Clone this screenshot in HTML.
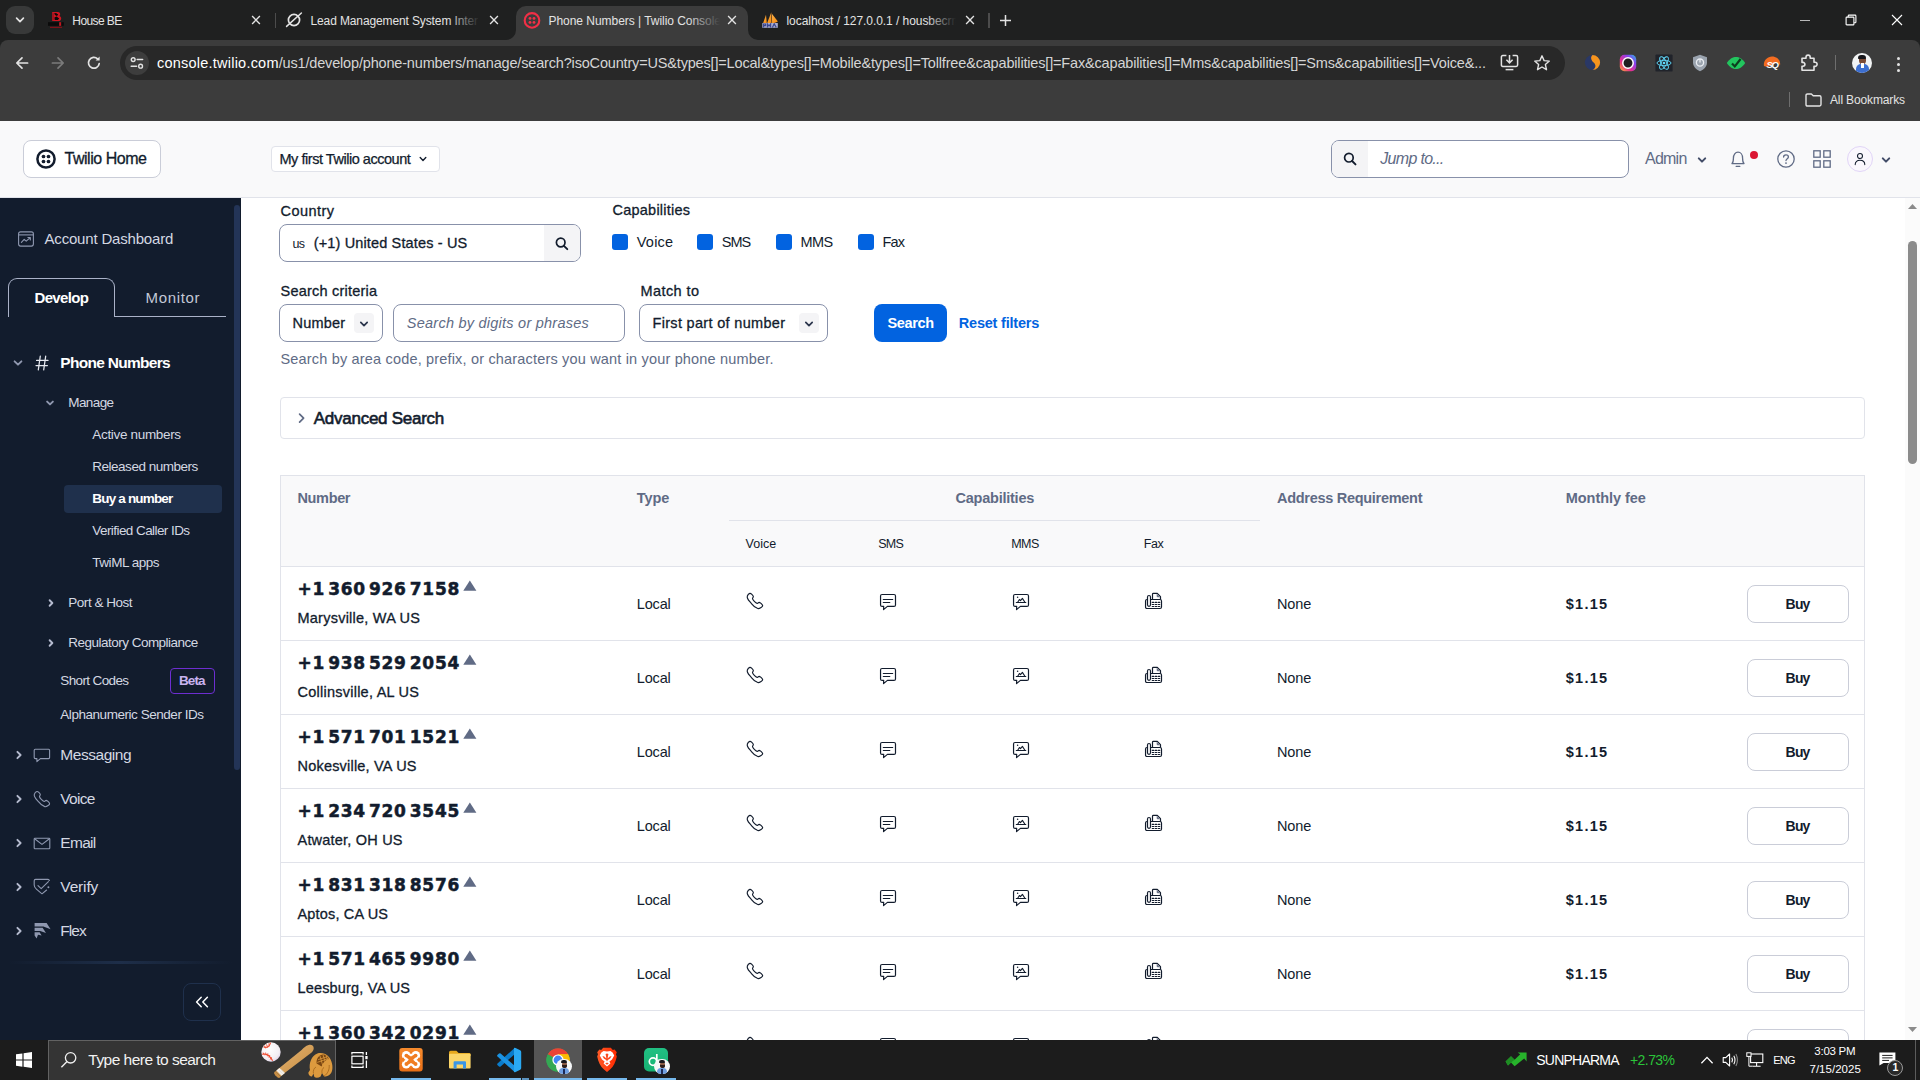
<!DOCTYPE html>
<html lang="en"><head><meta charset="utf-8"><title>Phone Numbers | Twilio Console</title>
<style>
html,body{margin:0;padding:0;}
body{width:1920px;height:1080px;overflow:hidden;position:relative;background:#fff;font-family:"Liberation Sans",sans-serif;}
.a{position:absolute;box-sizing:border-box;}
.t{white-space:pre;}
svg{overflow:visible;}
</style></head>
<body>
<div class="a" style="left:241px;top:197px;width:1679px;height:843px;background:#fff;"></div>
<span class="a t" style="left:280.5px;top:200.8px;font:500 14.5px/20px 'Liberation Sans',sans-serif;color:#121c2d;letter-spacing:0.453px;-webkit-text-stroke:0.3px #121c2d;">Country</span>
<span class="a t" style="left:612.5px;top:200.1px;font:500 14.5px/20px 'Liberation Sans',sans-serif;color:#121c2d;letter-spacing:0.230px;-webkit-text-stroke:0.3px #121c2d;">Capabilities</span>
<div class="a" style="left:279px;top:224px;width:302px;height:38px;background:#fff;border:1px solid #8891aa;border-radius:8px;"></div>
<div class="a" style="left:544px;top:225px;width:36px;height:36px;background:#f4f4f6;border-radius:0 7px 7px 0;"></div>
<svg class="a" style="left:554px;top:236px;" width="16" height="16" viewBox="0 0 16 16"><circle cx="6.7" cy="6.5" r="4.3" fill="none" stroke="#121c2d" stroke-width="1.7"/><path d="M9.9 9.8 L13.3 13.2" stroke="#121c2d" stroke-width="1.9" stroke-linecap="round"/></svg>
<span class="a t" style="left:292.5px;top:235.4px;font:400 12.5px/18px 'Liberation Sans',sans-serif;color:#121c2d;letter-spacing:-0.703px;">us</span>
<span class="a t" style="left:313.7px;top:233px;font:500 14.5px/20px 'Liberation Sans',sans-serif;color:#121c2d;letter-spacing:0.146px;-webkit-text-stroke:0.3px #121c2d;">(+1) United States - US</span>
<div class="a" style="left:612px;top:234px;width:16px;height:16px;background:#0263e0;border-radius:3px;"></div>
<span class="a t" style="left:636.8px;top:231.9px;font:400 14.5px/20px 'Liberation Sans',sans-serif;color:#121c2d;letter-spacing:0.204px;">Voice</span>
<div class="a" style="left:697px;top:234px;width:16px;height:16px;background:#0263e0;border-radius:3px;"></div>
<span class="a t" style="left:721.7px;top:231.9px;font:400 14.5px/20px 'Liberation Sans',sans-serif;color:#121c2d;letter-spacing:-0.911px;">SMS</span>
<div class="a" style="left:776px;top:234px;width:16px;height:16px;background:#0263e0;border-radius:3px;"></div>
<span class="a t" style="left:800.5px;top:231.9px;font:400 14.5px/20px 'Liberation Sans',sans-serif;color:#121c2d;letter-spacing:-0.522px;">MMS</span>
<div class="a" style="left:858px;top:234px;width:16px;height:16px;background:#0263e0;border-radius:3px;"></div>
<span class="a t" style="left:882.5px;top:231.9px;font:400 14.5px/20px 'Liberation Sans',sans-serif;color:#121c2d;letter-spacing:-0.836px;">Fax</span>
<span class="a t" style="left:280.5px;top:280.9px;font:500 14.5px/20px 'Liberation Sans',sans-serif;color:#121c2d;letter-spacing:0.215px;-webkit-text-stroke:0.3px #121c2d;">Search criteria</span>
<span class="a t" style="left:640.5px;top:280.9px;font:500 14.5px/20px 'Liberation Sans',sans-serif;color:#121c2d;letter-spacing:0.413px;-webkit-text-stroke:0.3px #121c2d;">Match to</span>
<div class="a" style="left:279px;top:304px;width:104px;height:38px;background:#fff;border:1px solid #8891aa;border-radius:8px;"></div>
<div class="a" style="left:354px;top:313px;width:20px;height:20px;background:#f4f4f6;border-radius:4px;"></div>
<svg class="a" style="left:359px;top:318.6px;" width="10" height="10" viewBox="0 0 10 10"><path d="M1.7999999999999998 3.4 L5 6.7 L8.2 3.4" fill="none" stroke="#2c364d" stroke-width="1.7" stroke-linecap="round" stroke-linejoin="round"/></svg>
<span class="a t" style="left:292.5px;top:313px;font:500 14.5px/20px 'Liberation Sans',sans-serif;color:#121c2d;letter-spacing:0.184px;-webkit-text-stroke:0.3px #121c2d;">Number</span>
<div class="a" style="left:393px;top:304px;width:232px;height:38px;background:#fff;border:1px solid #8891aa;border-radius:8px;"></div>
<span class="a t" style="left:406.8px;top:313px;font:italic 400 14.5px/20px 'Liberation Sans',sans-serif;color:#606b85;letter-spacing:0.242px;">Search by digits or phrases</span>
<div class="a" style="left:639px;top:304px;width:189px;height:38px;background:#fff;border:1px solid #8891aa;border-radius:8px;"></div>
<div class="a" style="left:799px;top:313px;width:20px;height:20px;background:#f4f4f6;border-radius:4px;"></div>
<svg class="a" style="left:804px;top:318.6px;" width="10" height="10" viewBox="0 0 10 10"><path d="M1.7999999999999998 3.4 L5 6.7 L8.2 3.4" fill="none" stroke="#2c364d" stroke-width="1.7" stroke-linecap="round" stroke-linejoin="round"/></svg>
<span class="a t" style="left:652.5px;top:313px;font:500 14.5px/20px 'Liberation Sans',sans-serif;color:#121c2d;letter-spacing:0.315px;-webkit-text-stroke:0.3px #121c2d;">First part of number</span>
<div class="a" style="left:874px;top:304px;width:73px;height:38px;background:#0263e0;border-radius:8px;"></div>
<span class="a t" style="left:887.5px;top:313px;font:700 14.5px/20px 'Liberation Sans',sans-serif;color:#fff;letter-spacing:-0.375px;">Search</span>
<span class="a t" style="left:958.8px;top:313px;font:700 14.5px/20px 'Liberation Sans',sans-serif;color:#0263e0;letter-spacing:-0.210px;">Reset filters</span>
<span class="a t" style="left:280.5px;top:349px;font:400 14.5px/20px 'Liberation Sans',sans-serif;color:#606b85;letter-spacing:0.175px;">Search by area code, prefix, or characters you want in your phone number.</span>
<div class="a" style="left:280px;top:397px;width:1585px;height:42px;background:#fff;border:1px solid #e1e3ea;border-radius:4px;"></div>
<svg class="a" style="left:296px;top:412px;" width="12" height="12" viewBox="0 0 12 12"><path d="M3.6 2.2 L7.6 6.2 L3.6 10.2" fill="none" stroke="#606b85" stroke-width="1.7" stroke-linecap="round" stroke-linejoin="round"/></svg>
<span class="a t" style="left:313.8px;top:406.6px;font:400 17px/24px 'Liberation Sans',sans-serif;color:#121c2d;letter-spacing:-0.265px;-webkit-text-stroke:0.6px #121c2d;">Advanced Search</span>
<div class="a" style="left:280px;top:475px;width:1585px;height:620px;background:#fff;border:1px solid #e1e3ea;"></div>
<div class="a" style="left:281px;top:476px;width:1583px;height:90px;background:#f9f9fa;"></div>
<div class="a" style="left:281px;top:566px;width:1583px;height:1px;background:#e1e3ea;"></div>
<div class="a" style="left:729px;top:520px;width:531px;height:1px;background:#e1e3ea;"></div>
<span class="a t" style="left:297.5px;top:488px;font:700 14.5px/20px 'Liberation Sans',sans-serif;color:#606b85;letter-spacing:-0.359px;">Number</span>
<span class="a t" style="left:636.8px;top:488px;font:700 14.5px/20px 'Liberation Sans',sans-serif;color:#606b85;letter-spacing:-0.094px;">Type</span>
<span class="a t" style="left:955.5px;top:488px;font:700 14.5px/20px 'Liberation Sans',sans-serif;color:#606b85;letter-spacing:-0.236px;">Capabilities</span>
<span class="a t" style="left:1277px;top:488px;font:700 14.5px/20px 'Liberation Sans',sans-serif;color:#606b85;letter-spacing:-0.288px;">Address Requirement</span>
<span class="a t" style="left:1565.8px;top:488px;font:700 14.5px/20px 'Liberation Sans',sans-serif;color:#606b85;letter-spacing:-0.056px;">Monthly fee</span>
<span class="a t" style="left:745.5px;top:534.6px;font:400 12.5px/18px 'Liberation Sans',sans-serif;color:#121c2d;letter-spacing:0.052px;">Voice</span>
<span class="a t" style="left:878.3px;top:534.6px;font:400 12.5px/18px 'Liberation Sans',sans-serif;color:#121c2d;letter-spacing:-0.797px;">SMS</span>
<span class="a t" style="left:1011.3px;top:534.6px;font:400 12.5px/18px 'Liberation Sans',sans-serif;color:#121c2d;letter-spacing:-0.586px;">MMS</span>
<span class="a t" style="left:1143.8px;top:534.6px;font:400 12.5px/18px 'Liberation Sans',sans-serif;color:#121c2d;letter-spacing:-0.422px;">Fax</span>
<span class="a t" style="left:297.5px;top:576.6px;font:700 17px/24px 'DejaVu Sans','Liberation Sans',sans-serif;color:#121c2d;letter-spacing:0.727px;word-spacing:-3.5px;-webkit-text-stroke:0.5px #121c2d;">+1 360 926 7158</span>
<svg class="a" style="left:463px;top:580px;" width="14" height="11" viewBox="0 0 14 11"><path d="M0.3 10.7 L6.85 0.6 L13.4 10.7 Z" fill="#606b85"/></svg>
<span class="a t" style="left:297.5px;top:608px;font:500 14.5px/20px 'Liberation Sans',sans-serif;color:#121c2d;letter-spacing:0.237px;-webkit-text-stroke:0.3px #121c2d;">Marysville, WA US</span>
<span class="a t" style="left:636.8px;top:594.2px;font:400 14.5px/20px 'Liberation Sans',sans-serif;color:#121c2d;letter-spacing:-0.168px;">Local</span>
<svg class="a" style="left:746px;top:592px;" width="18" height="18" viewBox="0 0 18 18"><path d="M3.86 1.42 C4.9 1.2 7.0 3.1 7.33 4.33 C7.55 5.3 6.4 5.7 6.5 6.56 C6.7 7.9 9.6 10.9 11.22 11.42 C12.1 11.6 12.3 10.2 13.17 10.31 C14.3 10.5 16.5 12.5 16.64 13.64 C16.7 14.4 15.9 15.0 15.11 15.44 C14.1 16.1 12.9 16.9 11.78 16.56 C9.5 15.9 7.3 13.9 5.67 11.83 C4.0 9.9 2.0 7.9 1.5 6.28 C1.1 5.2 1.2 4.6 1.36 4.06 C1.7 3.1 2.8 1.7 3.86 1.42 Z" fill="none" stroke="#121c2d" stroke-width="1.15" stroke-linejoin="round"/></svg>
<svg class="a" style="left:880px;top:594px;" width="18" height="18" viewBox="0 0 18 18"><path d="M2.05 0.5 H14.0 Q15.5 0.5 15.5 2.0 V10.9 Q15.5 12.4 14.0 12.4 H7.4 L3.55 15.6 L3.7 12.4 H2.05 Q0.55 12.4 0.55 10.9 V2.0 Q0.55 0.5 2.05 0.5 Z" fill="none" stroke="#121c2d" stroke-width="1.2" stroke-linejoin="round"/><path d="M3.3 5.45 H12.7 M3.3 8.45 H9.8" stroke="#121c2d" stroke-width="1.15" stroke-linecap="round"/></svg>
<svg class="a" style="left:1013px;top:594px;" width="18" height="18" viewBox="0 0 18 18"><path d="M2.05 0.5 H14.0 Q15.5 0.5 15.5 2.0 V10.9 Q15.5 12.4 14.0 12.4 H7.4 L3.55 15.6 L3.7 12.4 H2.05 Q0.55 12.4 0.55 10.9 V2.0 Q0.55 0.5 2.05 0.5 Z" fill="none" stroke="#121c2d" stroke-width="1.2" stroke-linejoin="round"/><path d="M3.3 8.45 H12.8 M4.7 8.3 L6.4 5.5 L7.5 6.6 L9.4 4.4 L11.9 8.3" fill="none" stroke="#121c2d" stroke-width="1.1" stroke-linecap="round" stroke-linejoin="round"/><circle cx="4.6" cy="3.3" r="0.75" fill="#121c2d"/></svg>
<svg class="a" style="left:1144px;top:592px;" width="19" height="18" viewBox="0 0 19 18"><path d="M7.0 7.5 H16.0 Q17.5 7.5 17.5 9.0 V15.0 Q17.5 16.5 16.0 16.5 H3.0 Q1.55 16.5 1.55 15.0 V9.0 Q1.55 7.5 3.0 7.5 H3.5" fill="none" stroke="#121c2d" stroke-width="1.2"/><rect x="3.5" y="3.5" width="3.0" height="10.8" rx="1.5" fill="#fff" stroke="#121c2d" stroke-width="1.2"/><path d="M8.5 7.5 V2.3 Q8.5 1.45 9.4 1.45 H13.3 L16.5 4.7 V7.5" fill="none" stroke="#121c2d" stroke-width="1.2" stroke-linejoin="round"/><path d="M12.7 1.7 L16.3 5.3 H13.7 Q12.7 5.3 12.7 4.3 Z" fill="#6c7489"/><path d="M8.25 10.4 H9.75 M11.25 10.4 H12.75 M14.25 10.4 H15.75 M8.25 12.45 H9.75 M11.25 12.45 H12.75 M14.25 12.45 H15.75 M8.25 14.45 H9.75 M11.25 14.45 H12.75 M14.25 14.45 H15.75 " stroke="#121c2d" stroke-width="1.15" stroke-linecap="round"/></svg>
<span class="a t" style="left:1277px;top:594.2px;font:400 14.5px/20px 'Liberation Sans',sans-serif;color:#121c2d;letter-spacing:-0.124px;">None</span>
<span class="a t" style="left:1565.8px;top:594.2px;font:700 14.5px/20px 'Liberation Sans',sans-serif;color:#121c2d;letter-spacing:1.251px;">$1.15</span>
<div class="a" style="left:1747px;top:585px;width:102px;height:38px;background:#fff;border:1px solid #cacdd8;border-radius:8px;"></div>
<span class="a t" style="left:1785.6px;top:594px;font:700 14px/20px 'Liberation Sans',sans-serif;color:#121c2d;letter-spacing:-0.827px;">Buy</span>
<div class="a" style="left:281px;top:640px;width:1583px;height:1px;background:#e1e3ea;"></div>
<span class="a t" style="left:297.5px;top:650.6px;font:700 17px/24px 'DejaVu Sans','Liberation Sans',sans-serif;color:#121c2d;letter-spacing:0.727px;word-spacing:-3.5px;-webkit-text-stroke:0.5px #121c2d;">+1 938 529 2054</span>
<svg class="a" style="left:463px;top:654px;" width="14" height="11" viewBox="0 0 14 11"><path d="M0.3 10.7 L6.85 0.6 L13.4 10.7 Z" fill="#606b85"/></svg>
<span class="a t" style="left:297.5px;top:682px;font:500 14.5px/20px 'Liberation Sans',sans-serif;color:#121c2d;letter-spacing:0.243px;-webkit-text-stroke:0.3px #121c2d;">Collinsville, AL US</span>
<span class="a t" style="left:636.8px;top:668.2px;font:400 14.5px/20px 'Liberation Sans',sans-serif;color:#121c2d;letter-spacing:-0.168px;">Local</span>
<svg class="a" style="left:746px;top:666px;" width="18" height="18" viewBox="0 0 18 18"><path d="M3.86 1.42 C4.9 1.2 7.0 3.1 7.33 4.33 C7.55 5.3 6.4 5.7 6.5 6.56 C6.7 7.9 9.6 10.9 11.22 11.42 C12.1 11.6 12.3 10.2 13.17 10.31 C14.3 10.5 16.5 12.5 16.64 13.64 C16.7 14.4 15.9 15.0 15.11 15.44 C14.1 16.1 12.9 16.9 11.78 16.56 C9.5 15.9 7.3 13.9 5.67 11.83 C4.0 9.9 2.0 7.9 1.5 6.28 C1.1 5.2 1.2 4.6 1.36 4.06 C1.7 3.1 2.8 1.7 3.86 1.42 Z" fill="none" stroke="#121c2d" stroke-width="1.15" stroke-linejoin="round"/></svg>
<svg class="a" style="left:880px;top:668px;" width="18" height="18" viewBox="0 0 18 18"><path d="M2.05 0.5 H14.0 Q15.5 0.5 15.5 2.0 V10.9 Q15.5 12.4 14.0 12.4 H7.4 L3.55 15.6 L3.7 12.4 H2.05 Q0.55 12.4 0.55 10.9 V2.0 Q0.55 0.5 2.05 0.5 Z" fill="none" stroke="#121c2d" stroke-width="1.2" stroke-linejoin="round"/><path d="M3.3 5.45 H12.7 M3.3 8.45 H9.8" stroke="#121c2d" stroke-width="1.15" stroke-linecap="round"/></svg>
<svg class="a" style="left:1013px;top:668px;" width="18" height="18" viewBox="0 0 18 18"><path d="M2.05 0.5 H14.0 Q15.5 0.5 15.5 2.0 V10.9 Q15.5 12.4 14.0 12.4 H7.4 L3.55 15.6 L3.7 12.4 H2.05 Q0.55 12.4 0.55 10.9 V2.0 Q0.55 0.5 2.05 0.5 Z" fill="none" stroke="#121c2d" stroke-width="1.2" stroke-linejoin="round"/><path d="M3.3 8.45 H12.8 M4.7 8.3 L6.4 5.5 L7.5 6.6 L9.4 4.4 L11.9 8.3" fill="none" stroke="#121c2d" stroke-width="1.1" stroke-linecap="round" stroke-linejoin="round"/><circle cx="4.6" cy="3.3" r="0.75" fill="#121c2d"/></svg>
<svg class="a" style="left:1144px;top:666px;" width="19" height="18" viewBox="0 0 19 18"><path d="M7.0 7.5 H16.0 Q17.5 7.5 17.5 9.0 V15.0 Q17.5 16.5 16.0 16.5 H3.0 Q1.55 16.5 1.55 15.0 V9.0 Q1.55 7.5 3.0 7.5 H3.5" fill="none" stroke="#121c2d" stroke-width="1.2"/><rect x="3.5" y="3.5" width="3.0" height="10.8" rx="1.5" fill="#fff" stroke="#121c2d" stroke-width="1.2"/><path d="M8.5 7.5 V2.3 Q8.5 1.45 9.4 1.45 H13.3 L16.5 4.7 V7.5" fill="none" stroke="#121c2d" stroke-width="1.2" stroke-linejoin="round"/><path d="M12.7 1.7 L16.3 5.3 H13.7 Q12.7 5.3 12.7 4.3 Z" fill="#6c7489"/><path d="M8.25 10.4 H9.75 M11.25 10.4 H12.75 M14.25 10.4 H15.75 M8.25 12.45 H9.75 M11.25 12.45 H12.75 M14.25 12.45 H15.75 M8.25 14.45 H9.75 M11.25 14.45 H12.75 M14.25 14.45 H15.75 " stroke="#121c2d" stroke-width="1.15" stroke-linecap="round"/></svg>
<span class="a t" style="left:1277px;top:668.2px;font:400 14.5px/20px 'Liberation Sans',sans-serif;color:#121c2d;letter-spacing:-0.124px;">None</span>
<span class="a t" style="left:1565.8px;top:668.2px;font:700 14.5px/20px 'Liberation Sans',sans-serif;color:#121c2d;letter-spacing:1.251px;">$1.15</span>
<div class="a" style="left:1747px;top:659px;width:102px;height:38px;background:#fff;border:1px solid #cacdd8;border-radius:8px;"></div>
<span class="a t" style="left:1785.6px;top:668px;font:700 14px/20px 'Liberation Sans',sans-serif;color:#121c2d;letter-spacing:-0.827px;">Buy</span>
<div class="a" style="left:281px;top:714px;width:1583px;height:1px;background:#e1e3ea;"></div>
<span class="a t" style="left:297.5px;top:724.6px;font:700 17px/24px 'DejaVu Sans','Liberation Sans',sans-serif;color:#121c2d;letter-spacing:0.727px;word-spacing:-3.5px;-webkit-text-stroke:0.5px #121c2d;">+1 571 701 1521</span>
<svg class="a" style="left:463px;top:728px;" width="14" height="11" viewBox="0 0 14 11"><path d="M0.3 10.7 L6.85 0.6 L13.4 10.7 Z" fill="#606b85"/></svg>
<span class="a t" style="left:297.5px;top:756px;font:500 14.5px/20px 'Liberation Sans',sans-serif;color:#121c2d;letter-spacing:0.201px;-webkit-text-stroke:0.3px #121c2d;">Nokesville, VA US</span>
<span class="a t" style="left:636.8px;top:742.2px;font:400 14.5px/20px 'Liberation Sans',sans-serif;color:#121c2d;letter-spacing:-0.168px;">Local</span>
<svg class="a" style="left:746px;top:740px;" width="18" height="18" viewBox="0 0 18 18"><path d="M3.86 1.42 C4.9 1.2 7.0 3.1 7.33 4.33 C7.55 5.3 6.4 5.7 6.5 6.56 C6.7 7.9 9.6 10.9 11.22 11.42 C12.1 11.6 12.3 10.2 13.17 10.31 C14.3 10.5 16.5 12.5 16.64 13.64 C16.7 14.4 15.9 15.0 15.11 15.44 C14.1 16.1 12.9 16.9 11.78 16.56 C9.5 15.9 7.3 13.9 5.67 11.83 C4.0 9.9 2.0 7.9 1.5 6.28 C1.1 5.2 1.2 4.6 1.36 4.06 C1.7 3.1 2.8 1.7 3.86 1.42 Z" fill="none" stroke="#121c2d" stroke-width="1.15" stroke-linejoin="round"/></svg>
<svg class="a" style="left:880px;top:742px;" width="18" height="18" viewBox="0 0 18 18"><path d="M2.05 0.5 H14.0 Q15.5 0.5 15.5 2.0 V10.9 Q15.5 12.4 14.0 12.4 H7.4 L3.55 15.6 L3.7 12.4 H2.05 Q0.55 12.4 0.55 10.9 V2.0 Q0.55 0.5 2.05 0.5 Z" fill="none" stroke="#121c2d" stroke-width="1.2" stroke-linejoin="round"/><path d="M3.3 5.45 H12.7 M3.3 8.45 H9.8" stroke="#121c2d" stroke-width="1.15" stroke-linecap="round"/></svg>
<svg class="a" style="left:1013px;top:742px;" width="18" height="18" viewBox="0 0 18 18"><path d="M2.05 0.5 H14.0 Q15.5 0.5 15.5 2.0 V10.9 Q15.5 12.4 14.0 12.4 H7.4 L3.55 15.6 L3.7 12.4 H2.05 Q0.55 12.4 0.55 10.9 V2.0 Q0.55 0.5 2.05 0.5 Z" fill="none" stroke="#121c2d" stroke-width="1.2" stroke-linejoin="round"/><path d="M3.3 8.45 H12.8 M4.7 8.3 L6.4 5.5 L7.5 6.6 L9.4 4.4 L11.9 8.3" fill="none" stroke="#121c2d" stroke-width="1.1" stroke-linecap="round" stroke-linejoin="round"/><circle cx="4.6" cy="3.3" r="0.75" fill="#121c2d"/></svg>
<svg class="a" style="left:1144px;top:740px;" width="19" height="18" viewBox="0 0 19 18"><path d="M7.0 7.5 H16.0 Q17.5 7.5 17.5 9.0 V15.0 Q17.5 16.5 16.0 16.5 H3.0 Q1.55 16.5 1.55 15.0 V9.0 Q1.55 7.5 3.0 7.5 H3.5" fill="none" stroke="#121c2d" stroke-width="1.2"/><rect x="3.5" y="3.5" width="3.0" height="10.8" rx="1.5" fill="#fff" stroke="#121c2d" stroke-width="1.2"/><path d="M8.5 7.5 V2.3 Q8.5 1.45 9.4 1.45 H13.3 L16.5 4.7 V7.5" fill="none" stroke="#121c2d" stroke-width="1.2" stroke-linejoin="round"/><path d="M12.7 1.7 L16.3 5.3 H13.7 Q12.7 5.3 12.7 4.3 Z" fill="#6c7489"/><path d="M8.25 10.4 H9.75 M11.25 10.4 H12.75 M14.25 10.4 H15.75 M8.25 12.45 H9.75 M11.25 12.45 H12.75 M14.25 12.45 H15.75 M8.25 14.45 H9.75 M11.25 14.45 H12.75 M14.25 14.45 H15.75 " stroke="#121c2d" stroke-width="1.15" stroke-linecap="round"/></svg>
<span class="a t" style="left:1277px;top:742.2px;font:400 14.5px/20px 'Liberation Sans',sans-serif;color:#121c2d;letter-spacing:-0.124px;">None</span>
<span class="a t" style="left:1565.8px;top:742.2px;font:700 14.5px/20px 'Liberation Sans',sans-serif;color:#121c2d;letter-spacing:1.251px;">$1.15</span>
<div class="a" style="left:1747px;top:733px;width:102px;height:38px;background:#fff;border:1px solid #cacdd8;border-radius:8px;"></div>
<span class="a t" style="left:1785.6px;top:742px;font:700 14px/20px 'Liberation Sans',sans-serif;color:#121c2d;letter-spacing:-0.827px;">Buy</span>
<div class="a" style="left:281px;top:788px;width:1583px;height:1px;background:#e1e3ea;"></div>
<span class="a t" style="left:297.5px;top:798.6px;font:700 17px/24px 'DejaVu Sans','Liberation Sans',sans-serif;color:#121c2d;letter-spacing:0.727px;word-spacing:-3.5px;-webkit-text-stroke:0.5px #121c2d;">+1 234 720 3545</span>
<svg class="a" style="left:463px;top:802px;" width="14" height="11" viewBox="0 0 14 11"><path d="M0.3 10.7 L6.85 0.6 L13.4 10.7 Z" fill="#606b85"/></svg>
<span class="a t" style="left:297.5px;top:830px;font:500 14.5px/20px 'Liberation Sans',sans-serif;color:#121c2d;letter-spacing:0.204px;-webkit-text-stroke:0.3px #121c2d;">Atwater, OH US</span>
<span class="a t" style="left:636.8px;top:816.2px;font:400 14.5px/20px 'Liberation Sans',sans-serif;color:#121c2d;letter-spacing:-0.168px;">Local</span>
<svg class="a" style="left:746px;top:814px;" width="18" height="18" viewBox="0 0 18 18"><path d="M3.86 1.42 C4.9 1.2 7.0 3.1 7.33 4.33 C7.55 5.3 6.4 5.7 6.5 6.56 C6.7 7.9 9.6 10.9 11.22 11.42 C12.1 11.6 12.3 10.2 13.17 10.31 C14.3 10.5 16.5 12.5 16.64 13.64 C16.7 14.4 15.9 15.0 15.11 15.44 C14.1 16.1 12.9 16.9 11.78 16.56 C9.5 15.9 7.3 13.9 5.67 11.83 C4.0 9.9 2.0 7.9 1.5 6.28 C1.1 5.2 1.2 4.6 1.36 4.06 C1.7 3.1 2.8 1.7 3.86 1.42 Z" fill="none" stroke="#121c2d" stroke-width="1.15" stroke-linejoin="round"/></svg>
<svg class="a" style="left:880px;top:816px;" width="18" height="18" viewBox="0 0 18 18"><path d="M2.05 0.5 H14.0 Q15.5 0.5 15.5 2.0 V10.9 Q15.5 12.4 14.0 12.4 H7.4 L3.55 15.6 L3.7 12.4 H2.05 Q0.55 12.4 0.55 10.9 V2.0 Q0.55 0.5 2.05 0.5 Z" fill="none" stroke="#121c2d" stroke-width="1.2" stroke-linejoin="round"/><path d="M3.3 5.45 H12.7 M3.3 8.45 H9.8" stroke="#121c2d" stroke-width="1.15" stroke-linecap="round"/></svg>
<svg class="a" style="left:1013px;top:816px;" width="18" height="18" viewBox="0 0 18 18"><path d="M2.05 0.5 H14.0 Q15.5 0.5 15.5 2.0 V10.9 Q15.5 12.4 14.0 12.4 H7.4 L3.55 15.6 L3.7 12.4 H2.05 Q0.55 12.4 0.55 10.9 V2.0 Q0.55 0.5 2.05 0.5 Z" fill="none" stroke="#121c2d" stroke-width="1.2" stroke-linejoin="round"/><path d="M3.3 8.45 H12.8 M4.7 8.3 L6.4 5.5 L7.5 6.6 L9.4 4.4 L11.9 8.3" fill="none" stroke="#121c2d" stroke-width="1.1" stroke-linecap="round" stroke-linejoin="round"/><circle cx="4.6" cy="3.3" r="0.75" fill="#121c2d"/></svg>
<svg class="a" style="left:1144px;top:814px;" width="19" height="18" viewBox="0 0 19 18"><path d="M7.0 7.5 H16.0 Q17.5 7.5 17.5 9.0 V15.0 Q17.5 16.5 16.0 16.5 H3.0 Q1.55 16.5 1.55 15.0 V9.0 Q1.55 7.5 3.0 7.5 H3.5" fill="none" stroke="#121c2d" stroke-width="1.2"/><rect x="3.5" y="3.5" width="3.0" height="10.8" rx="1.5" fill="#fff" stroke="#121c2d" stroke-width="1.2"/><path d="M8.5 7.5 V2.3 Q8.5 1.45 9.4 1.45 H13.3 L16.5 4.7 V7.5" fill="none" stroke="#121c2d" stroke-width="1.2" stroke-linejoin="round"/><path d="M12.7 1.7 L16.3 5.3 H13.7 Q12.7 5.3 12.7 4.3 Z" fill="#6c7489"/><path d="M8.25 10.4 H9.75 M11.25 10.4 H12.75 M14.25 10.4 H15.75 M8.25 12.45 H9.75 M11.25 12.45 H12.75 M14.25 12.45 H15.75 M8.25 14.45 H9.75 M11.25 14.45 H12.75 M14.25 14.45 H15.75 " stroke="#121c2d" stroke-width="1.15" stroke-linecap="round"/></svg>
<span class="a t" style="left:1277px;top:816.2px;font:400 14.5px/20px 'Liberation Sans',sans-serif;color:#121c2d;letter-spacing:-0.124px;">None</span>
<span class="a t" style="left:1565.8px;top:816.2px;font:700 14.5px/20px 'Liberation Sans',sans-serif;color:#121c2d;letter-spacing:1.251px;">$1.15</span>
<div class="a" style="left:1747px;top:807px;width:102px;height:38px;background:#fff;border:1px solid #cacdd8;border-radius:8px;"></div>
<span class="a t" style="left:1785.6px;top:816px;font:700 14px/20px 'Liberation Sans',sans-serif;color:#121c2d;letter-spacing:-0.827px;">Buy</span>
<div class="a" style="left:281px;top:862px;width:1583px;height:1px;background:#e1e3ea;"></div>
<span class="a t" style="left:297.5px;top:872.6px;font:700 17px/24px 'DejaVu Sans','Liberation Sans',sans-serif;color:#121c2d;letter-spacing:0.727px;word-spacing:-3.5px;-webkit-text-stroke:0.5px #121c2d;">+1 831 318 8576</span>
<svg class="a" style="left:463px;top:876px;" width="14" height="11" viewBox="0 0 14 11"><path d="M0.3 10.7 L6.85 0.6 L13.4 10.7 Z" fill="#606b85"/></svg>
<span class="a t" style="left:297.5px;top:904px;font:500 14.5px/20px 'Liberation Sans',sans-serif;color:#121c2d;letter-spacing:0.168px;-webkit-text-stroke:0.3px #121c2d;">Aptos, CA US</span>
<span class="a t" style="left:636.8px;top:890.2px;font:400 14.5px/20px 'Liberation Sans',sans-serif;color:#121c2d;letter-spacing:-0.168px;">Local</span>
<svg class="a" style="left:746px;top:888px;" width="18" height="18" viewBox="0 0 18 18"><path d="M3.86 1.42 C4.9 1.2 7.0 3.1 7.33 4.33 C7.55 5.3 6.4 5.7 6.5 6.56 C6.7 7.9 9.6 10.9 11.22 11.42 C12.1 11.6 12.3 10.2 13.17 10.31 C14.3 10.5 16.5 12.5 16.64 13.64 C16.7 14.4 15.9 15.0 15.11 15.44 C14.1 16.1 12.9 16.9 11.78 16.56 C9.5 15.9 7.3 13.9 5.67 11.83 C4.0 9.9 2.0 7.9 1.5 6.28 C1.1 5.2 1.2 4.6 1.36 4.06 C1.7 3.1 2.8 1.7 3.86 1.42 Z" fill="none" stroke="#121c2d" stroke-width="1.15" stroke-linejoin="round"/></svg>
<svg class="a" style="left:880px;top:890px;" width="18" height="18" viewBox="0 0 18 18"><path d="M2.05 0.5 H14.0 Q15.5 0.5 15.5 2.0 V10.9 Q15.5 12.4 14.0 12.4 H7.4 L3.55 15.6 L3.7 12.4 H2.05 Q0.55 12.4 0.55 10.9 V2.0 Q0.55 0.5 2.05 0.5 Z" fill="none" stroke="#121c2d" stroke-width="1.2" stroke-linejoin="round"/><path d="M3.3 5.45 H12.7 M3.3 8.45 H9.8" stroke="#121c2d" stroke-width="1.15" stroke-linecap="round"/></svg>
<svg class="a" style="left:1013px;top:890px;" width="18" height="18" viewBox="0 0 18 18"><path d="M2.05 0.5 H14.0 Q15.5 0.5 15.5 2.0 V10.9 Q15.5 12.4 14.0 12.4 H7.4 L3.55 15.6 L3.7 12.4 H2.05 Q0.55 12.4 0.55 10.9 V2.0 Q0.55 0.5 2.05 0.5 Z" fill="none" stroke="#121c2d" stroke-width="1.2" stroke-linejoin="round"/><path d="M3.3 8.45 H12.8 M4.7 8.3 L6.4 5.5 L7.5 6.6 L9.4 4.4 L11.9 8.3" fill="none" stroke="#121c2d" stroke-width="1.1" stroke-linecap="round" stroke-linejoin="round"/><circle cx="4.6" cy="3.3" r="0.75" fill="#121c2d"/></svg>
<svg class="a" style="left:1144px;top:888px;" width="19" height="18" viewBox="0 0 19 18"><path d="M7.0 7.5 H16.0 Q17.5 7.5 17.5 9.0 V15.0 Q17.5 16.5 16.0 16.5 H3.0 Q1.55 16.5 1.55 15.0 V9.0 Q1.55 7.5 3.0 7.5 H3.5" fill="none" stroke="#121c2d" stroke-width="1.2"/><rect x="3.5" y="3.5" width="3.0" height="10.8" rx="1.5" fill="#fff" stroke="#121c2d" stroke-width="1.2"/><path d="M8.5 7.5 V2.3 Q8.5 1.45 9.4 1.45 H13.3 L16.5 4.7 V7.5" fill="none" stroke="#121c2d" stroke-width="1.2" stroke-linejoin="round"/><path d="M12.7 1.7 L16.3 5.3 H13.7 Q12.7 5.3 12.7 4.3 Z" fill="#6c7489"/><path d="M8.25 10.4 H9.75 M11.25 10.4 H12.75 M14.25 10.4 H15.75 M8.25 12.45 H9.75 M11.25 12.45 H12.75 M14.25 12.45 H15.75 M8.25 14.45 H9.75 M11.25 14.45 H12.75 M14.25 14.45 H15.75 " stroke="#121c2d" stroke-width="1.15" stroke-linecap="round"/></svg>
<span class="a t" style="left:1277px;top:890.2px;font:400 14.5px/20px 'Liberation Sans',sans-serif;color:#121c2d;letter-spacing:-0.124px;">None</span>
<span class="a t" style="left:1565.8px;top:890.2px;font:700 14.5px/20px 'Liberation Sans',sans-serif;color:#121c2d;letter-spacing:1.251px;">$1.15</span>
<div class="a" style="left:1747px;top:881px;width:102px;height:38px;background:#fff;border:1px solid #cacdd8;border-radius:8px;"></div>
<span class="a t" style="left:1785.6px;top:890px;font:700 14px/20px 'Liberation Sans',sans-serif;color:#121c2d;letter-spacing:-0.827px;">Buy</span>
<div class="a" style="left:281px;top:936px;width:1583px;height:1px;background:#e1e3ea;"></div>
<span class="a t" style="left:297.5px;top:946.6px;font:700 17px/24px 'DejaVu Sans','Liberation Sans',sans-serif;color:#121c2d;letter-spacing:0.727px;word-spacing:-3.5px;-webkit-text-stroke:0.5px #121c2d;">+1 571 465 9980</span>
<svg class="a" style="left:463px;top:950px;" width="14" height="11" viewBox="0 0 14 11"><path d="M0.3 10.7 L6.85 0.6 L13.4 10.7 Z" fill="#606b85"/></svg>
<span class="a t" style="left:297.5px;top:978px;font:500 14.5px/20px 'Liberation Sans',sans-serif;color:#121c2d;letter-spacing:0.166px;-webkit-text-stroke:0.3px #121c2d;">Leesburg, VA US</span>
<span class="a t" style="left:636.8px;top:964.2px;font:400 14.5px/20px 'Liberation Sans',sans-serif;color:#121c2d;letter-spacing:-0.168px;">Local</span>
<svg class="a" style="left:746px;top:962px;" width="18" height="18" viewBox="0 0 18 18"><path d="M3.86 1.42 C4.9 1.2 7.0 3.1 7.33 4.33 C7.55 5.3 6.4 5.7 6.5 6.56 C6.7 7.9 9.6 10.9 11.22 11.42 C12.1 11.6 12.3 10.2 13.17 10.31 C14.3 10.5 16.5 12.5 16.64 13.64 C16.7 14.4 15.9 15.0 15.11 15.44 C14.1 16.1 12.9 16.9 11.78 16.56 C9.5 15.9 7.3 13.9 5.67 11.83 C4.0 9.9 2.0 7.9 1.5 6.28 C1.1 5.2 1.2 4.6 1.36 4.06 C1.7 3.1 2.8 1.7 3.86 1.42 Z" fill="none" stroke="#121c2d" stroke-width="1.15" stroke-linejoin="round"/></svg>
<svg class="a" style="left:880px;top:964px;" width="18" height="18" viewBox="0 0 18 18"><path d="M2.05 0.5 H14.0 Q15.5 0.5 15.5 2.0 V10.9 Q15.5 12.4 14.0 12.4 H7.4 L3.55 15.6 L3.7 12.4 H2.05 Q0.55 12.4 0.55 10.9 V2.0 Q0.55 0.5 2.05 0.5 Z" fill="none" stroke="#121c2d" stroke-width="1.2" stroke-linejoin="round"/><path d="M3.3 5.45 H12.7 M3.3 8.45 H9.8" stroke="#121c2d" stroke-width="1.15" stroke-linecap="round"/></svg>
<svg class="a" style="left:1013px;top:964px;" width="18" height="18" viewBox="0 0 18 18"><path d="M2.05 0.5 H14.0 Q15.5 0.5 15.5 2.0 V10.9 Q15.5 12.4 14.0 12.4 H7.4 L3.55 15.6 L3.7 12.4 H2.05 Q0.55 12.4 0.55 10.9 V2.0 Q0.55 0.5 2.05 0.5 Z" fill="none" stroke="#121c2d" stroke-width="1.2" stroke-linejoin="round"/><path d="M3.3 8.45 H12.8 M4.7 8.3 L6.4 5.5 L7.5 6.6 L9.4 4.4 L11.9 8.3" fill="none" stroke="#121c2d" stroke-width="1.1" stroke-linecap="round" stroke-linejoin="round"/><circle cx="4.6" cy="3.3" r="0.75" fill="#121c2d"/></svg>
<svg class="a" style="left:1144px;top:962px;" width="19" height="18" viewBox="0 0 19 18"><path d="M7.0 7.5 H16.0 Q17.5 7.5 17.5 9.0 V15.0 Q17.5 16.5 16.0 16.5 H3.0 Q1.55 16.5 1.55 15.0 V9.0 Q1.55 7.5 3.0 7.5 H3.5" fill="none" stroke="#121c2d" stroke-width="1.2"/><rect x="3.5" y="3.5" width="3.0" height="10.8" rx="1.5" fill="#fff" stroke="#121c2d" stroke-width="1.2"/><path d="M8.5 7.5 V2.3 Q8.5 1.45 9.4 1.45 H13.3 L16.5 4.7 V7.5" fill="none" stroke="#121c2d" stroke-width="1.2" stroke-linejoin="round"/><path d="M12.7 1.7 L16.3 5.3 H13.7 Q12.7 5.3 12.7 4.3 Z" fill="#6c7489"/><path d="M8.25 10.4 H9.75 M11.25 10.4 H12.75 M14.25 10.4 H15.75 M8.25 12.45 H9.75 M11.25 12.45 H12.75 M14.25 12.45 H15.75 M8.25 14.45 H9.75 M11.25 14.45 H12.75 M14.25 14.45 H15.75 " stroke="#121c2d" stroke-width="1.15" stroke-linecap="round"/></svg>
<span class="a t" style="left:1277px;top:964.2px;font:400 14.5px/20px 'Liberation Sans',sans-serif;color:#121c2d;letter-spacing:-0.124px;">None</span>
<span class="a t" style="left:1565.8px;top:964.2px;font:700 14.5px/20px 'Liberation Sans',sans-serif;color:#121c2d;letter-spacing:1.251px;">$1.15</span>
<div class="a" style="left:1747px;top:955px;width:102px;height:38px;background:#fff;border:1px solid #cacdd8;border-radius:8px;"></div>
<span class="a t" style="left:1785.6px;top:964px;font:700 14px/20px 'Liberation Sans',sans-serif;color:#121c2d;letter-spacing:-0.827px;">Buy</span>
<div class="a" style="left:281px;top:1010px;width:1583px;height:1px;background:#e1e3ea;"></div>
<span class="a t" style="left:297.5px;top:1020.6px;font:700 17px/24px 'DejaVu Sans','Liberation Sans',sans-serif;color:#121c2d;letter-spacing:0.727px;word-spacing:-3.5px;-webkit-text-stroke:0.5px #121c2d;">+1 360 342 0291</span>
<svg class="a" style="left:463px;top:1024px;" width="14" height="11" viewBox="0 0 14 11"><path d="M0.3 10.7 L6.85 0.6 L13.4 10.7 Z" fill="#606b85"/></svg>
<span class="a t" style="left:297.5px;top:1052px;font:500 14.5px/20px 'Liberation Sans',sans-serif;color:#121c2d;letter-spacing:-0.094px;-webkit-text-stroke:0.3px #121c2d;">Camano Island, WA US</span>
<span class="a t" style="left:636.8px;top:1038.2px;font:400 14.5px/20px 'Liberation Sans',sans-serif;color:#121c2d;letter-spacing:-0.168px;">Local</span>
<svg class="a" style="left:746px;top:1036px;" width="18" height="18" viewBox="0 0 18 18"><path d="M3.86 1.42 C4.9 1.2 7.0 3.1 7.33 4.33 C7.55 5.3 6.4 5.7 6.5 6.56 C6.7 7.9 9.6 10.9 11.22 11.42 C12.1 11.6 12.3 10.2 13.17 10.31 C14.3 10.5 16.5 12.5 16.64 13.64 C16.7 14.4 15.9 15.0 15.11 15.44 C14.1 16.1 12.9 16.9 11.78 16.56 C9.5 15.9 7.3 13.9 5.67 11.83 C4.0 9.9 2.0 7.9 1.5 6.28 C1.1 5.2 1.2 4.6 1.36 4.06 C1.7 3.1 2.8 1.7 3.86 1.42 Z" fill="none" stroke="#121c2d" stroke-width="1.15" stroke-linejoin="round"/></svg>
<svg class="a" style="left:880px;top:1038px;" width="18" height="18" viewBox="0 0 18 18"><path d="M2.05 0.5 H14.0 Q15.5 0.5 15.5 2.0 V10.9 Q15.5 12.4 14.0 12.4 H7.4 L3.55 15.6 L3.7 12.4 H2.05 Q0.55 12.4 0.55 10.9 V2.0 Q0.55 0.5 2.05 0.5 Z" fill="none" stroke="#121c2d" stroke-width="1.2" stroke-linejoin="round"/><path d="M3.3 5.45 H12.7 M3.3 8.45 H9.8" stroke="#121c2d" stroke-width="1.15" stroke-linecap="round"/></svg>
<svg class="a" style="left:1013px;top:1038px;" width="18" height="18" viewBox="0 0 18 18"><path d="M2.05 0.5 H14.0 Q15.5 0.5 15.5 2.0 V10.9 Q15.5 12.4 14.0 12.4 H7.4 L3.55 15.6 L3.7 12.4 H2.05 Q0.55 12.4 0.55 10.9 V2.0 Q0.55 0.5 2.05 0.5 Z" fill="none" stroke="#121c2d" stroke-width="1.2" stroke-linejoin="round"/><path d="M3.3 8.45 H12.8 M4.7 8.3 L6.4 5.5 L7.5 6.6 L9.4 4.4 L11.9 8.3" fill="none" stroke="#121c2d" stroke-width="1.1" stroke-linecap="round" stroke-linejoin="round"/><circle cx="4.6" cy="3.3" r="0.75" fill="#121c2d"/></svg>
<svg class="a" style="left:1144px;top:1036px;" width="19" height="18" viewBox="0 0 19 18"><path d="M7.0 7.5 H16.0 Q17.5 7.5 17.5 9.0 V15.0 Q17.5 16.5 16.0 16.5 H3.0 Q1.55 16.5 1.55 15.0 V9.0 Q1.55 7.5 3.0 7.5 H3.5" fill="none" stroke="#121c2d" stroke-width="1.2"/><rect x="3.5" y="3.5" width="3.0" height="10.8" rx="1.5" fill="#fff" stroke="#121c2d" stroke-width="1.2"/><path d="M8.5 7.5 V2.3 Q8.5 1.45 9.4 1.45 H13.3 L16.5 4.7 V7.5" fill="none" stroke="#121c2d" stroke-width="1.2" stroke-linejoin="round"/><path d="M12.7 1.7 L16.3 5.3 H13.7 Q12.7 5.3 12.7 4.3 Z" fill="#6c7489"/><path d="M8.25 10.4 H9.75 M11.25 10.4 H12.75 M14.25 10.4 H15.75 M8.25 12.45 H9.75 M11.25 12.45 H12.75 M14.25 12.45 H15.75 M8.25 14.45 H9.75 M11.25 14.45 H12.75 M14.25 14.45 H15.75 " stroke="#121c2d" stroke-width="1.15" stroke-linecap="round"/></svg>
<span class="a t" style="left:1277px;top:1038.2px;font:400 14.5px/20px 'Liberation Sans',sans-serif;color:#121c2d;letter-spacing:-0.124px;">None</span>
<span class="a t" style="left:1565.8px;top:1038.2px;font:700 14.5px/20px 'Liberation Sans',sans-serif;color:#121c2d;letter-spacing:1.251px;">$1.15</span>
<div class="a" style="left:1747px;top:1029px;width:102px;height:38px;background:#fff;border:1px solid #cacdd8;border-radius:8px;"></div>
<span class="a t" style="left:1785.6px;top:1038px;font:700 14px/20px 'Liberation Sans',sans-serif;color:#121c2d;letter-spacing:-0.827px;">Buy</span>
<div class="a" style="left:1905px;top:198px;width:15px;height:842px;background:#fbfbfb;"></div>
<div class="a" style="left:1908px;top:241px;width:9px;height:223px;background:#8b8b8b;border-radius:5px;"></div>
<svg class="a" style="left:1907px;top:201px;" width="11" height="10" viewBox="0 0 11 10"><path d="M1 8 L5.5 3 L10 8 Z" fill="#8b8b8b"/></svg>
<svg class="a" style="left:1907px;top:1025px;" width="11" height="10" viewBox="0 0 11 10"><path d="M1 2 L5.5 7 L10 2 Z" fill="#8b8b8b"/></svg>
<div class="a" style="left:0px;top:198px;width:241px;height:842px;background:#121c2d;"></div>
<div class="a" style="left:234px;top:205px;width:6px;height:565px;background:#233457;border-radius:3px;"></div>
<svg class="a" style="left:18px;top:231px;" width="16" height="16" viewBox="0 0 16 16"><rect x="0.6" y="0.9" width="14.8" height="14.2" rx="2" fill="none" stroke="#8f98b0" stroke-width="1.1"/><path d="M0.6 3.9 H15.4" stroke="#8f98b0" stroke-width="1.1"/><path d="M3.4 11.3 L6.2 8.3 L8.2 10.2 L12.2 6.6 M9.9 6.5 H12.3 V8.9" fill="none" stroke="#8f98b0" stroke-width="1.1" stroke-linecap="round" stroke-linejoin="round"/></svg>
<span class="a t" style="left:44.5px;top:227.8px;font:400 15px/21px 'Liberation Sans',sans-serif;color:#d4d8e2;letter-spacing:-0.184px;">Account Dashboard</span>
<div class="a" style="left:8px;top:278px;width:107px;height:39px;border:1px solid #aab2c8;border-top-width:1.5px;border-bottom:none;border-radius:9px 9px 0 0;"></div>
<div class="a" style="left:114px;top:316px;width:112px;height:1.3px;background:#aab2c8;"></div>
<span class="a t" style="left:34.5px;top:287.3px;font:700 15px/21px 'Liberation Sans',sans-serif;color:#fff;letter-spacing:-0.677px;">Develop</span>
<span class="a t" style="left:145.5px;top:287.3px;font:400 15px/21px 'Liberation Sans',sans-serif;color:#c3c8d6;letter-spacing:0.661px;">Monitor</span>
<svg class="a" style="left:12px;top:358.2px;" width="12" height="10" viewBox="0 0 12 10"><path d="M2.6 3.3 L6 6.7 L9.4 3.3" fill="none" stroke="#9098b0" stroke-width="1.9" stroke-linecap="round" stroke-linejoin="round"/></svg>
<svg class="a" style="left:35px;top:355px;" width="14" height="16" viewBox="0 0 14 16"><path d="M5.3 1.2 L3.3 14.8 M10.7 1.2 L8.7 14.8 M1.6 5.4 H13.0 M1.0 10.6 H12.4" fill="none" stroke="#e4e7ee" stroke-width="1.25" stroke-linecap="round"/></svg>
<span class="a t" style="left:60.3px;top:351.7px;font:700 15.5px/22px 'Liberation Sans',sans-serif;color:#fff;letter-spacing:-0.713px;">Phone Numbers</span>
<svg class="a" style="left:44px;top:398px;" width="12" height="10" viewBox="0 0 12 10"><path d="M3.1100000000000003 3.555 L6 6.445 L8.89 3.555" fill="none" stroke="#9098b0" stroke-width="1.9" stroke-linecap="round" stroke-linejoin="round"/></svg>
<span class="a t" style="left:68.3px;top:392.8px;font:400 13.5px/19px 'Liberation Sans',sans-serif;color:#d4d8e2;letter-spacing:-0.599px;">Manage</span>
<span class="a t" style="left:92.3px;top:424.8px;font:400 13.5px/19px 'Liberation Sans',sans-serif;color:#d4d8e2;letter-spacing:-0.327px;">Active numbers</span>
<span class="a t" style="left:92.3px;top:456.8px;font:400 13.5px/19px 'Liberation Sans',sans-serif;color:#d4d8e2;letter-spacing:-0.489px;">Released numbers</span>
<div class="a" style="left:64px;top:485px;width:158px;height:28px;background:#1f304c;border-radius:4px;"></div>
<span class="a t" style="left:92.3px;top:488.8px;font:700 13.5px/19px 'Liberation Sans',sans-serif;color:#fff;letter-spacing:-0.821px;">Buy a number</span>
<span class="a t" style="left:92.3px;top:520.8px;font:400 13.5px/19px 'Liberation Sans',sans-serif;color:#d4d8e2;letter-spacing:-0.569px;">Verified Caller IDs</span>
<span class="a t" style="left:92.3px;top:553px;font:400 13.5px/19px 'Liberation Sans',sans-serif;color:#d4d8e2;letter-spacing:-0.470px;">TwiML apps</span>
<svg class="a" style="left:45.5px;top:596.5px;" width="10" height="12" viewBox="0 0 10 12"><path d="M3.6399999999999997 3.28 L6.36 6 L3.6399999999999997 8.72" fill="none" stroke="#b4bace" stroke-width="1.9" stroke-linecap="round" stroke-linejoin="round"/></svg>
<span class="a t" style="left:68.3px;top:592.5px;font:400 13.5px/19px 'Liberation Sans',sans-serif;color:#d4d8e2;letter-spacing:-0.473px;">Port &amp; Host</span>
<svg class="a" style="left:45.5px;top:636.5px;" width="10" height="12" viewBox="0 0 10 12"><path d="M3.6399999999999997 3.28 L6.36 6 L3.6399999999999997 8.72" fill="none" stroke="#b4bace" stroke-width="1.9" stroke-linecap="round" stroke-linejoin="round"/></svg>
<span class="a t" style="left:68.3px;top:633px;font:400 13.5px/19px 'Liberation Sans',sans-serif;color:#d4d8e2;letter-spacing:-0.516px;">Regulatory Compliance</span>
<span class="a t" style="left:60.3px;top:671px;font:400 13.5px/19px 'Liberation Sans',sans-serif;color:#d4d8e2;letter-spacing:-0.625px;">Short Codes</span>
<div class="a" style="left:170px;top:668px;width:45px;height:26px;border:1px solid #6d2ed1;border-radius:4px;"></div>
<span class="a t" style="left:179px;top:671px;font:700 13.5px/19px 'Liberation Sans',sans-serif;color:#c9b3f0;letter-spacing:-0.922px;">Beta</span>
<span class="a t" style="left:60.3px;top:705px;font:400 13.5px/19px 'Liberation Sans',sans-serif;color:#d4d8e2;letter-spacing:-0.456px;">Alphanumeric Sender IDs</span>
<svg class="a" style="left:13.8px;top:749px;" width="10" height="12" viewBox="0 0 10 12"><path d="M3.4 2.8 L6.6 6 L3.4 9.2" fill="none" stroke="#b4bace" stroke-width="1.9" stroke-linecap="round" stroke-linejoin="round"/></svg>
<span class="a t" style="left:60.3px;top:744px;font:400 15.5px/22px 'Liberation Sans',sans-serif;color:#d4d8e2;letter-spacing:-0.459px;">Messaging</span>
<svg class="a" style="left:13.8px;top:793px;" width="10" height="12" viewBox="0 0 10 12"><path d="M3.4 2.8 L6.6 6 L3.4 9.2" fill="none" stroke="#b4bace" stroke-width="1.9" stroke-linecap="round" stroke-linejoin="round"/></svg>
<span class="a t" style="left:60.3px;top:788px;font:400 15.5px/22px 'Liberation Sans',sans-serif;color:#d4d8e2;letter-spacing:-0.730px;">Voice</span>
<svg class="a" style="left:13.8px;top:836.8px;" width="10" height="12" viewBox="0 0 10 12"><path d="M3.4 2.8 L6.6 6 L3.4 9.2" fill="none" stroke="#b4bace" stroke-width="1.9" stroke-linecap="round" stroke-linejoin="round"/></svg>
<span class="a t" style="left:60.3px;top:831.8px;font:400 15.5px/22px 'Liberation Sans',sans-serif;color:#d4d8e2;letter-spacing:-0.691px;">Email</span>
<svg class="a" style="left:13.8px;top:880.8px;" width="10" height="12" viewBox="0 0 10 12"><path d="M3.4 2.8 L6.6 6 L3.4 9.2" fill="none" stroke="#b4bace" stroke-width="1.9" stroke-linecap="round" stroke-linejoin="round"/></svg>
<span class="a t" style="left:60.3px;top:875.8px;font:400 15.5px/22px 'Liberation Sans',sans-serif;color:#d4d8e2;letter-spacing:-0.153px;">Verify</span>
<svg class="a" style="left:13.8px;top:924.8px;" width="10" height="12" viewBox="0 0 10 12"><path d="M3.4 2.8 L6.6 6 L3.4 9.2" fill="none" stroke="#b4bace" stroke-width="1.9" stroke-linecap="round" stroke-linejoin="round"/></svg>
<span class="a t" style="left:60.3px;top:919.8px;font:400 15.5px/22px 'Liberation Sans',sans-serif;color:#d4d8e2;letter-spacing:-0.932px;">Flex</span>
<svg class="a" style="left:33px;top:748px;" width="18" height="15" viewBox="0 0 18 15"><path d="M2.2 1.2 H15.6 Q16.6 1.2 16.6 2.2 V9.6 Q16.6 10.6 15.6 10.6 H7.4 L3.9 13.6 L3.9 10.6 H2.2 Q1.2 10.6 1.2 9.6 V2.2 Q1.2 1.2 2.2 1.2 Z" fill="none" stroke="#8f98b0" stroke-width="1.1" stroke-linejoin="round"/></svg>
<svg class="a" style="left:33px;top:790px;" width="18" height="18" viewBox="0 0 18 18"><path d="M3.9 1.5 C4.9 1.3 7.0 3.2 7.3 4.4 C7.5 5.4 6.4 5.8 6.5 6.6 C6.7 8.0 9.6 11.0 11.2 11.5 C12.1 11.7 12.3 10.3 13.2 10.4 C14.3 10.6 16.5 12.6 16.6 13.7 C16.7 14.5 15.9 15.1 15.1 15.5 C14.1 16.2 12.9 17.0 11.8 16.6 C9.5 16.0 7.3 14.0 5.7 11.9 C4.0 10.0 2.0 8.0 1.5 6.3 C1.1 5.3 1.2 4.7 1.4 4.1 C1.7 3.2 2.8 1.8 3.9 1.5 Z" fill="none" stroke="#8f98b0" stroke-width="1.1" stroke-linejoin="round"/></svg>
<svg class="a" style="left:33px;top:835px;" width="18" height="15" viewBox="0 0 18 15"><rect x="1.2" y="3.2" width="15.6" height="10.6" rx="0.8" fill="none" stroke="#8f98b0" stroke-width="1.1"/><path d="M1.6 3.8 L9.0 9.4 L16.4 3.8" fill="none" stroke="#8f98b0" stroke-width="1.1" stroke-linejoin="round"/></svg>
<svg class="a" style="left:33px;top:878px;" width="18" height="18" viewBox="0 0 18 18"><path d="M16.4 2.4 C16.0 1.6 15.4 1.4 14.6 1.4 H2.6 Q1.2 1.4 1.2 2.8 V7.0 C1.2 9.0 2.0 10.0 3.4 11.2 L9.0 15.8 L13.6 12.0" fill="none" stroke="#8f98b0" stroke-width="1.1" stroke-linejoin="round" stroke-linecap="round"/><path d="M5.0 7.6 L8.2 10.6 L15.4 3.6" fill="none" stroke="#8f98b0" stroke-width="1.1" stroke-linecap="round" stroke-linejoin="round"/><circle cx="15.4" cy="9.2" r="1.0" fill="#8f98b0"/></svg>
<svg class="a" style="left:33.5px;top:922px;" width="18" height="18" viewBox="0 0 18 18"><path d="M0.6 0.9 H12.6 L16.6 7.2 L9.4 4.5 H0.6 Z" fill="#8f98b0"/><path d="M0.6 5.7 H8.6 L12.0 10.9 L6.2 9.1 H0.6 Z" fill="#8f98b0"/><path d="M0.6 10.3 H5.6 L7.6 13.4 L4.0 12.8 L2.6 16.6 L0.6 13.6 Z" fill="#8f98b0"/></svg>
<div class="a" style="left:8px;top:961px;width:224px;height:3px;background:linear-gradient(90deg,rgba(31,48,76,0),rgba(31,48,76,.9) 50%,rgba(31,48,76,0));"></div>
<div class="a" style="left:183px;top:983px;width:38px;height:38px;border:1px solid #1f304c;border-radius:8px;"></div>
<svg class="a" style="left:195px;top:996px;" width="14" height="12" viewBox="0 0 14 12"><path d="M6.2 1.2 L1.6 6 L6.2 10.8 M12.4 1.2 L7.8 6 L12.4 10.8" fill="none" stroke="#fff" stroke-width="1.5" stroke-linecap="round" stroke-linejoin="round"/></svg>
<div class="a" style="left:0px;top:121px;width:1920px;height:76px;background:#f9f9fa;"></div>
<div class="a" style="left:0px;top:197px;width:1920px;height:1px;background:#e1e3ea;"></div>
<div class="a" style="left:23px;top:140px;width:138px;height:38px;background:#fff;border:1px solid #cacdd8;border-radius:8px;"></div>
<svg class="a" style="left:36px;top:149px;" width="20" height="20" viewBox="0 0 20 20"><circle cx="10" cy="10" r="8.6" fill="none" stroke="#121c2d" stroke-width="2.5"/><circle cx="7.5" cy="7.5" r="1.85" fill="#121c2d"/><circle cx="12.5" cy="7.5" r="1.85" fill="#121c2d"/><circle cx="7.5" cy="12.5" r="1.85" fill="#121c2d"/><circle cx="12.5" cy="12.5" r="1.85" fill="#121c2d"/></svg>
<span class="a t" style="left:64.5px;top:148.3px;font:400 16px/22px 'Liberation Sans',sans-serif;color:#121c2d;letter-spacing:-0.464px;-webkit-text-stroke:0.3px #121c2d;">Twilio Home</span>
<div class="a" style="left:271px;top:146px;width:169px;height:26px;background:#fff;border:1px solid #e1e3ea;border-radius:4px;"></div>
<span class="a t" style="left:279.5px;top:148.8px;font:400 14.5px/20px 'Liberation Sans',sans-serif;color:#121c2d;letter-spacing:-0.466px;-webkit-text-stroke:0.25px #121c2d;">My first Twilio account</span>
<svg class="a" style="left:418px;top:154px;" width="10" height="10" viewBox="0 0 10 10"><path d="M2.2 3.6 L5 6.4 L7.8 3.6" fill="none" stroke="#121c2d" stroke-width="1.4" stroke-linecap="round" stroke-linejoin="round"/></svg>
<div class="a" style="left:1331px;top:140px;width:298px;height:38px;background:#fff;border:1px solid #8891aa;border-radius:8px;"></div>
<div class="a" style="left:1332px;top:141px;width:36px;height:36px;background:#f4f4f6;border-radius:7px 0 0 7px;"></div>
<svg class="a" style="left:1342px;top:151px;" width="16" height="16" viewBox="0 0 16 16"><circle cx="6.9" cy="6.7" r="4.3" fill="none" stroke="#121c2d" stroke-width="1.7"/><path d="M10.1 10.0 L13.5 13.4" stroke="#121c2d" stroke-width="1.9" stroke-linecap="round"/></svg>
<span class="a t" style="left:1380.3px;top:148px;font:italic 400 16px/22px 'Liberation Sans',sans-serif;color:#606b85;letter-spacing:-0.694px;">Jump to...</span>
<span class="a t" style="left:1645px;top:148px;font:400 16px/22px 'Liberation Sans',sans-serif;color:#606b85;letter-spacing:-0.765px;">Admin</span>
<svg class="a" style="left:1697px;top:154.5px;" width="10" height="10" viewBox="0 0 10 10"><path d="M1.8 3.4 L5 6.6 L8.2 3.4" fill="none" stroke="#434d68" stroke-width="2.0" stroke-linecap="round" stroke-linejoin="round"/></svg>
<svg class="a" style="left:1729px;top:150px;" width="18" height="18" viewBox="0 0 18 18"><path d="M3.0 13.6 H15.0 C13.6 12.4 13.6 10.8 13.6 8.2 C13.6 4.6 11.6 2.2 9.0 2.2 C6.4 2.2 4.4 4.6 4.4 8.2 C4.4 10.8 4.4 12.4 3.0 13.6 Z" fill="none" stroke="#606b85" stroke-width="1.3" stroke-linejoin="round"/><path d="M7.2 16.4 H10.8" stroke="#606b85" stroke-width="1.3" stroke-linecap="round"/></svg>
<div class="a" style="left:1750px;top:151px;width:8px;height:8px;border-radius:50%;background:#db1632;"></div>
<svg class="a" style="left:1776px;top:149px;" width="20" height="20" viewBox="0 0 20 20"><circle cx="10" cy="10" r="8.2" fill="none" stroke="#606b85" stroke-width="1.3"/><path d="M7.6 8.0 C7.6 6.6 8.7 5.8 10.0 5.8 C11.4 5.8 12.4 6.7 12.4 7.9 C12.4 9.6 10.0 9.7 10.0 11.6" fill="none" stroke="#606b85" stroke-width="1.3" stroke-linecap="round"/><circle cx="10" cy="14.1" r="0.9" fill="#606b85"/></svg>
<svg class="a" style="left:1813px;top:150px;" width="18" height="18" viewBox="0 0 18 18"><rect x="0.8" y="0.8" width="6.4" height="6.4" fill="none" stroke="#606b85" stroke-width="1.3"/><rect x="0.8" y="10.8" width="6.4" height="6.4" fill="none" stroke="#606b85" stroke-width="1.3"/><rect x="10.8" y="0.8" width="6.4" height="6.4" fill="none" stroke="#606b85" stroke-width="1.3"/><rect x="10.8" y="10.8" width="6.4" height="6.4" fill="none" stroke="#606b85" stroke-width="1.3"/></svg>
<div class="a" style="left:1847px;top:145.8px;width:26px;height:26px;border-radius:50%;background:#faf7fd;border:1px solid #e1d5f7;"></div>
<svg class="a" style="left:1852px;top:151px;" width="16" height="16" viewBox="0 0 16 16"><circle cx="8" cy="5.0" r="2.5" fill="none" stroke="#121c2d" stroke-width="1.05"/><path d="M3.2 13.6 C3.2 10.6 5.2 9.2 8 9.2 C10.8 9.2 12.8 10.6 12.8 13.6" fill="none" stroke="#121c2d" stroke-width="1.05" stroke-linecap="round"/></svg>
<svg class="a" style="left:1881px;top:154.5px;" width="10" height="10" viewBox="0 0 10 10"><path d="M1.8 3.4 L5 6.6 L8.2 3.4" fill="none" stroke="#434d68" stroke-width="2.0" stroke-linecap="round" stroke-linejoin="round"/></svg>
<div class="a" style="left:0px;top:0px;width:1920px;height:52px;background:#1f2020;"></div>
<div class="a" style="left:0px;top:40px;width:1920px;height:81px;background:#3c3c3c;border-radius:8px 8px 0 0;"></div>
<div class="a" style="left:6px;top:6px;width:28px;height:28px;background:#383939;border-radius:9px;"></div>
<svg class="a" style="left:15px;top:15px;" width="10" height="10" viewBox="0 0 10 10"><path d="M1.6 3.2 L5 6.6 L8.4 3.2" fill="none" stroke="#e3e3e3" stroke-width="1.7" stroke-linecap="round" stroke-linejoin="round"/></svg>
<div class="a" style="left:516px;top:6px;width:232px;height:34px;background:#3c3c3c;border-radius:10px 10px 0 0;"></div>
<svg class="a" style="left:506px;top:30px;" width="10" height="10" viewBox="0 0 10 10"><path d="M10 0 V10 H0 A10 10 0 0 0 10 0 Z" fill="#3c3c3c"/></svg>
<svg class="a" style="left:748px;top:30px;" width="10" height="10" viewBox="0 0 10 10"><path d="M0 0 V10 H10 A10 10 0 0 1 0 0 Z" fill="#3c3c3c"/></svg>
<svg class="a" style="left:47px;top:11px;" width="18" height="18" viewBox="0 0 18 18"><path d="M5.2 1.0 H10.8 C12.6 1.0 13.2 2.2 13.2 3.2 C13.2 4.0 12.8 4.6 12.4 4.9 C13.6 5.4 14.2 6.4 14.2 7.4 C14.2 9.0 13.0 10.1 11.4 10.1 H5.2 Z" fill="#cf1622"/><path d="M7.0 2.4 L9.0 2.0 L11.2 3.6 L10.0 5.0 L8.4 4.2 Z M7.4 6.4 L9.6 5.6 L12.2 7.4 L10.8 8.9 H7.8 Z" fill="#0a0a0a"/><path d="M6.2 2.2 V9.2" stroke="#8d1018" stroke-width="0.9"/><rect x="1.0" y="11.2" width="11.0" height="3.6" fill="#0b0b0b"/><rect x="12.2" y="11.2" width="2.0" height="3.6" fill="#c2141f"/><rect x="14.4" y="11.2" width="2.4" height="3.6" fill="#0b0b0b"/><rect x="3.0" y="15.8" width="12.0" height="1.1" fill="#8a1119"/></svg>
<span class="a t" style="left:72.3px;top:12.8px;font:400 12px/17px 'Liberation Sans',sans-serif;color:#e3e3e3;letter-spacing:-0.576px;">House BE</span>
<svg class="a" style="left:250px;top:14px;" width="12" height="12" viewBox="0 0 12 12"><path d="M2.1 2.1 L9.9 9.9 M9.9 2.1 L2.1 9.9" stroke="#e3e3e3" stroke-width="1.35" stroke-linecap="butt"/></svg>
<div class="a" style="left:274.5px;top:12.5px;width:1.5px;height:15px;background:#4c4c4c;"></div>
<svg class="a" style="left:285px;top:11px;" width="18" height="18" viewBox="0 0 18 18"><circle cx="9" cy="9" r="5.6" fill="none" stroke="#e3e3e3" stroke-width="1.7"/><path d="M1.6 15.4 L16.4 2.0" stroke="#e3e3e3" stroke-width="1.5" stroke-linecap="round"/></svg>
<span class="a t" style="left:310.5px;top:12.8px;font:400 12px/17px 'Liberation Sans',sans-serif;color:#e3e3e3;letter-spacing:-0.121px;">Lead Management System Inter</span>
<div class="a" style="left:448px;top:10px;width:32px;height:22px;background:linear-gradient(90deg,#1f202000,#1f2020);"></div>
<svg class="a" style="left:488px;top:14px;" width="12" height="12" viewBox="0 0 12 12"><path d="M2.1 2.1 L9.9 9.9 M9.9 2.1 L2.1 9.9" stroke="#e3e3e3" stroke-width="1.35" stroke-linecap="butt"/></svg>
<svg class="a" style="left:523px;top:11px;" width="18" height="18" viewBox="0 0 18 18"><circle cx="9" cy="9.4" r="7.3" fill="none" stroke="#f22f46" stroke-width="2.1"/><circle cx="7.0" cy="7.4" r="1.45" fill="#f22f46"/><circle cx="11.0" cy="7.4" r="1.45" fill="#f22f46"/><circle cx="7.0" cy="11.4" r="1.45" fill="#f22f46"/><circle cx="11.0" cy="11.4" r="1.45" fill="#f22f46"/></svg>
<span class="a t" style="left:548.5px;top:12.8px;font:400 12px/17px 'Liberation Sans',sans-serif;color:#e3e3e3;letter-spacing:-0.040px;">Phone Numbers | Twilio Console</span>
<div class="a" style="left:688px;top:10px;width:32px;height:22px;background:linear-gradient(90deg,#3c3c3c00,#3c3c3c);"></div>
<div class="a" style="left:720px;top:10px;width:4px;height:22px;background:#3c3c3c;"></div>
<svg class="a" style="left:726px;top:14px;" width="12" height="12" viewBox="0 0 12 12"><path d="M2.1 2.1 L9.9 9.9 M9.9 2.1 L2.1 9.9" stroke="#e3e3e3" stroke-width="1.35" stroke-linecap="butt"/></svg>
<svg class="a" style="left:762px;top:12px;" width="16" height="16" viewBox="0 0 16 16"><defs><linearGradient id="sl" x1="0" y1="0" x2="1" y2="1"><stop offset="0" stop-color="#fbb04a"/><stop offset="1" stop-color="#f68a0c"/></linearGradient></defs><path d="M1.2 10.9 L4.0 2.8 L4.8 10.9 Z" fill="url(#sl)"/><path d="M5.2 10.9 L9.3 0.3 L9.5 10.9 Z" fill="url(#sl)"/><path d="M10.1 10.9 L9.9 1.8 L15.9 9.6 L12.6 10.9 Z" fill="url(#sl)"/><rect x="0.3" y="11.0" width="15.5" height="4.8" fill="#a9add0"/><path d="M1.6 15.4 V12.0 H3.6 V13.6 H1.6 M5.4 15.4 V12.0 L7.0 14.0 L8.6 12.0 V15.4 M10.4 15.4 L12.2 11.8 L14.2 15.4" fill="none" stroke="#3b478f" stroke-width="1.15"/></svg>
<span class="a t" style="left:786.5px;top:12.8px;font:400 12px/17px 'Liberation Sans',sans-serif;color:#e3e3e3;letter-spacing:-0.056px;">localhost / 127.0.0.1 / housbecrm</span>
<div class="a" style="left:926px;top:10px;width:30px;height:22px;background:linear-gradient(90deg,#1f202000,#1f2020);"></div>
<div class="a" style="left:956px;top:10px;width:8px;height:22px;background:#1f2020;"></div>
<svg class="a" style="left:964px;top:14px;" width="12" height="12" viewBox="0 0 12 12"><path d="M2.1 2.1 L9.9 9.9 M9.9 2.1 L2.1 9.9" stroke="#e3e3e3" stroke-width="1.35" stroke-linecap="butt"/></svg>
<div class="a" style="left:988px;top:12.5px;width:1.5px;height:15px;background:#4c4c4c;"></div>
<svg class="a" style="left:999px;top:14px;" width="13" height="13" viewBox="0 0 13 13"><path d="M6.5 1 V12 M1 6.5 H12" stroke="#e3e3e3" stroke-width="1.5"/></svg>
<div class="a" style="left:1800px;top:19.5px;width:10px;height:1.5px;background:#b8b8b8;"></div>
<svg class="a" style="left:1845px;top:14px;" width="12" height="12" viewBox="0 0 12 12"><rect x="1.1" y="3.1" width="7.8" height="7.8" rx="0.7" fill="none" stroke="#fff" stroke-width="1.1"/><path d="M3.2 3.0 V1.9 Q3.2 1.1 4.0 1.1 H10.1 Q10.9 1.1 10.9 1.9 V8.0 Q10.9 8.8 10.1 8.8 H9.0" fill="none" stroke="#fff" stroke-width="1.1"/></svg>
<svg class="a" style="left:1891px;top:14px;" width="12" height="12" viewBox="0 0 12 12"><path d="M1.0 1.0 L11.0 11.0 M11.0 1.0 L1.0 11.0" stroke="#fff" stroke-width="1.1" stroke-linecap="butt"/></svg>
<svg class="a" style="left:15px;top:56px;" width="14" height="14" viewBox="0 0 14 14"><path d="M12.6 7 H2.2 M7 1.8 L1.8 7 L7 12.2" fill="none" stroke="#e3e3e3" stroke-width="1.7" stroke-linecap="round" stroke-linejoin="round"/></svg>
<svg class="a" style="left:51px;top:56px;" width="14" height="14" viewBox="0 0 14 14"><path d="M1.4 7 H11.8 M7 1.8 L12.2 7 L7 12.2" fill="none" stroke="#7b7b7b" stroke-width="1.7" stroke-linecap="round" stroke-linejoin="round"/></svg>
<svg class="a" style="left:86px;top:55px;" width="16" height="16" viewBox="0 0 16 16"><path d="M13.2 8.6 A5.4 5.4 0 1 1 11.6 3.9" fill="none" stroke="#e3e3e3" stroke-width="1.7" stroke-linecap="round"/><path d="M13.6 1.4 V5.4 H9.6 Z" fill="#e3e3e3"/></svg>
<div class="a" style="left:120px;top:46px;width:1445px;height:34px;background:#282828;border-radius:17px;"></div>
<div class="a" style="left:125px;top:51px;width:24px;height:24px;border-radius:50%;background:#3d3d3d;"></div>
<svg class="a" style="left:129px;top:55px;" width="16" height="16" viewBox="0 0 16 16"><circle cx="4.2" cy="4.6" r="1.9" fill="none" stroke="#e3e3e3" stroke-width="1.4"/><path d="M8.2 4.6 H13.6" stroke="#e3e3e3" stroke-width="1.5" stroke-linecap="round"/><circle cx="11.6" cy="11.2" r="1.9" fill="none" stroke="#e3e3e3" stroke-width="1.4"/><path d="M2.2 11.2 H7.6" stroke="#e3e3e3" stroke-width="1.5" stroke-linecap="round"/></svg>
<span class="a t" style="left:157px;top:53.2px;font:400 14.5px/20px 'Liberation Sans',sans-serif;color:#ffffff;letter-spacing:0.225px;">console.twilio.com</span>
<span class="a t" style="left:278.7px;top:53.2px;font:400 14.5px/20px 'Liberation Sans',sans-serif;color:#d5d5d5;letter-spacing:-0.170px;">/us1/develop/phone-numbers/manage/search?isoCountry=US&amp;types[]=Local&amp;types[]=Mobile&amp;types[]=Tollfree&amp;capabilities[]=Fax&amp;capabilities[]=Mms&amp;capabilities[]=Sms&amp;capabilities[]=Voice&amp;...</span>
<svg class="a" style="left:1500px;top:54px;" width="19" height="17" viewBox="0 0 19 17"><path d="M12.6 1.6 H16.2 Q17.6 1.6 17.6 3.0 V11.0 Q17.6 12.4 16.2 12.4 H2.8 Q1.4 12.4 1.4 11.0 V3.0 Q1.4 1.6 2.8 1.6 H6.4" fill="none" stroke="#e3e3e3" stroke-width="1.5"/><path d="M5.6 15.6 H13.4" stroke="#e3e3e3" stroke-width="1.5"/><path d="M9.5 1.0 V8.6 M6.4 5.8 L9.5 8.9 L12.6 5.8" fill="none" stroke="#e3e3e3" stroke-width="1.5"/></svg>
<svg class="a" style="left:1533px;top:54px;" width="18" height="18" viewBox="0 0 18 18"><path d="M9 1.8 L11.1 6.6 L16.3 7.1 L12.4 10.6 L13.5 15.7 L9 13.0 L4.5 15.7 L5.6 10.6 L1.7 7.1 L6.9 6.6 Z" fill="none" stroke="#e3e3e3" stroke-width="1.4" stroke-linejoin="round"/></svg>
<svg class="a" style="left:1584px;top:54px;" width="17" height="17" viewBox="0 0 17 17"><circle cx="8.5" cy="8.5" r="7.6" fill="#2a3866"/><path d="M8.5 0.9 A7.6 7.6 0 0 1 8.5 16.1 C12.4 13.6 12.0 10.4 9.6 8.4 C7.2 6.2 6.0 3.2 8.5 0.9 Z" fill="#f7941d"/></svg>
<svg class="a" style="left:1619px;top:54px;" width="18" height="18" viewBox="0 0 18 18"><defs><linearGradient id="ig" x1="0" y1="1" x2="1" y2="0"><stop offset="0" stop-color="#f9b233"/><stop offset=".35" stop-color="#e8308c"/><stop offset=".7" stop-color="#8a3ff0"/><stop offset="1" stop-color="#22c3e6"/></linearGradient></defs><rect x="0.8" y="0.8" width="16.4" height="16.4" rx="4.6" fill="url(#ig)"/><circle cx="9" cy="9" r="5.2" fill="#1f1f1f"/><circle cx="9" cy="9" r="5.2" fill="none" stroke="#fff" stroke-width="1.5"/></svg>
<svg class="a" style="left:1655px;top:54px;" width="18" height="18" viewBox="0 0 18 18"><rect x="0.4" y="0.4" width="17.2" height="17.2" rx="1.2" fill="#20232a"/><g fill="none" stroke="#61dafb" stroke-width="0.9"><ellipse cx="9" cy="9" rx="7" ry="2.7"/><ellipse cx="9" cy="9" rx="7" ry="2.7" transform="rotate(60 9 9)"/><ellipse cx="9" cy="9" rx="7" ry="2.7" transform="rotate(120 9 9)"/></g><circle cx="9" cy="9" r="1.3" fill="#61dafb"/></svg>
<svg class="a" style="left:1692px;top:54px;" width="16" height="18" viewBox="0 0 16 18"><path d="M8 0.8 L15 3.2 V8.6 C15 12.6 12 15.8 8 17.2 C4 15.8 1 12.6 1 8.6 V3.2 Z" fill="#9aa3ae"/><circle cx="8" cy="8.6" r="3.6" fill="none" stroke="#e9edf2" stroke-width="1.3"/><path d="M8 5 V8.6" stroke="#e9edf2" stroke-width="1.3"/></svg>
<svg class="a" style="left:1726px;top:56px;" width="20" height="14" viewBox="0 0 20 14"><path d="M0.8 7 C3.6 2.6 7.0 1.0 10 1.0 C13.0 1.0 16.4 2.6 19.2 7 C16.4 11.4 13.0 13.0 10 13.0 C7.0 13.0 3.6 11.4 0.8 7 Z" fill="#22c55e"/><path d="M6.0 7.4 L8.8 10.4 L14.6 3.0" fill="none" stroke="#0c3d1e" stroke-width="2.2"/></svg>
<svg class="a" style="left:1762px;top:55px;" width="20" height="16" viewBox="0 0 20 16"><path d="M2 11 C1 6 5 1.4 10 1.4 C15 1.4 19 5 18 10.4 C17 8 14 7 12 8.6 C9 11 5 13 2 11 Z" fill="#f36c21"/></svg>
<span class="a t" style="left:1766.5px;top:57.7px;font:italic 700 9.5px/13px 'Liberation Sans',sans-serif;color:#fff;letter-spacing:-1.234px;">SQ</span>
<svg class="a" style="left:1799px;top:53px;" width="19" height="19" viewBox="0 0 19 19"><path d="M3.0 5.2 H7.0 V4.2 A2.1 2.1 0 0 1 11.2 4.2 V5.2 H15.0 V9.2 H16.0 A2.1 2.1 0 0 1 16.0 13.4 H15.0 V17.2 H3.0 V13.2 H4.0 A1.9 1.9 0 0 0 4.0 9.4 H3.0 Z" fill="none" stroke="#e3e3e3" stroke-width="1.6" stroke-linejoin="round"/></svg>
<div class="a" style="left:1834.5px;top:55px;width:1.5px;height:15px;background:#6e6e6e;"></div>
<div class="a" style="left:1852px;top:52.5px;width:20px;height:20px;border-radius:50%;background:#f1f3f4;overflow:hidden;"><div class="a" style="left:6.5px;top:3px;width:7px;height:8px;border-radius:45%;background:#7a4a35;"></div><div class="a" style="left:6px;top:2px;width:8px;height:4px;border-radius:4px 4px 1px 1px;background:#15151a;"></div><div class="a" style="left:3.5px;top:11px;width:13px;height:10px;border-radius:5px 5px 0 0;background:#3d6fd0;"></div><div class="a" style="left:8.5px;top:10.5px;width:3px;height:5px;background:#fff;"></div></div>
<div class="a" style="left:1896.5px;top:56.5px;width:3px;height:3px;border-radius:50%;background:#e3e3e3;"></div>
<div class="a" style="left:1896.5px;top:62.5px;width:3px;height:3px;border-radius:50%;background:#e3e3e3;"></div>
<div class="a" style="left:1896.5px;top:68.5px;width:3px;height:3px;border-radius:50%;background:#e3e3e3;"></div>
<div class="a" style="left:1788.5px;top:92px;width:1.5px;height:15px;background:#6e6e6e;"></div>
<svg class="a" style="left:1805px;top:93px;" width="17" height="14" viewBox="0 0 17 14"><path d="M1.0 2.4 Q1.0 1.0 2.4 1.0 H6.4 L8.2 2.8 H14.6 Q16.0 2.8 16.0 4.2 V11.6 Q16.0 13.0 14.6 13.0 H2.4 Q1.0 13.0 1.0 11.6 Z" fill="none" stroke="#e3e3e3" stroke-width="1.4" stroke-linejoin="round"/></svg>
<span class="a t" style="left:1830px;top:91.7px;font:400 12px/17px 'Liberation Sans',sans-serif;color:#e3e3e3;letter-spacing:-0.141px;">All Bookmarks</span>
<div class="a" style="left:0px;top:1040px;width:1920px;height:40px;background:#1c1c1c;"></div>
<svg class="a" style="left:16px;top:1052px;" width="16" height="16" viewBox="0 0 16 16"><path d="M0 2.3 L6.4 1.4 V7.4 H0 Z M7.6 1.25 L16 0 V7.4 H7.6 Z M0 8.6 H6.4 V14.7 L0 13.8 Z M7.6 8.6 H16 V16 L7.6 14.8 Z" fill="#fff"/></svg>
<div class="a" style="left:48px;top:1040px;width:288px;height:41px;background:#343434;border:1px solid #626262;"></div>
<svg class="a" style="left:60px;top:1051px;" width="18" height="18" viewBox="0 0 18 18"><circle cx="10.6" cy="6.8" r="5.2" fill="none" stroke="#f0f0f0" stroke-width="1.3"/><path d="M6.8 10.8 L1.4 16.2" stroke="#f0f0f0" stroke-width="1.4"/></svg>
<span class="a t" style="left:88.3px;top:1048.8px;font:400 15.5px/22px 'Liberation Sans',sans-serif;color:#f2f2f2;letter-spacing:-0.528px;">Type here to search</span>
<svg class="a" style="left:258px;top:1041px;" width="78" height="39" viewBox="0 0 78 39"><defs><radialGradient id="bb" cx="0.4" cy="0.35" r="0.75"><stop offset="0" stop-color="#ffffff"/><stop offset="0.7" stop-color="#f3eef3"/><stop offset="1" stop-color="#d9c8e6"/></radialGradient><linearGradient id="bat" x1="0" y1="0" x2="1" y2="1"><stop offset="0" stop-color="#e6b574"/><stop offset="1" stop-color="#c48a3e"/></linearGradient></defs><circle cx="13" cy="11" r="9.7" fill="url(#bb)"/><path d="M5.6 6.0 Q11.0 7.6 12.6 1.6 M4.0 13.2 Q10.6 11.6 14.6 19.8" fill="none" stroke="#ef4a2e" stroke-width="1.1"/><path d="M6.4 4.6 L7.6 7.4 M8.6 3.4 L9.6 6.6 M10.8 2.4 L11.4 5.4 M5.2 11.6 L6.4 14.2 M7.6 11.6 L8.2 14.4 M9.8 12.4 L9.8 15.4 M11.8 14.0 L11.0 16.8 M13.4 16.0 L12.2 18.6" stroke="#ef4a2e" stroke-width="0.9"/><path d="M17.6 30.2 L22.8 35.6 L26.0 32.6 L53.6 11.4 C57.6 8.0 55.6 2.6 50.6 4.0 C47.6 5.0 46.0 6.6 43.6 9.0 L20.8 27.4 Z" fill="url(#bat)"/><path d="M21.4 27.0 L27.0 32.0 L23.6 34.8 L18.4 29.6 Z" fill="#f3efe9"/><path d="M22.6 28.2 L26.0 31.4 M20.8 29.0 L24.6 32.8" stroke="#d8d2ca" stroke-width="0.6"/><path d="M16.6 30.8 C15.6 32.0 16.2 33.2 17.2 34.2 L19.6 36.4 C20.8 37.2 22.0 37.0 22.8 35.8 L17.6 30.2 Z" fill="#c98f45"/><path d="M52.0 29.0 C50.6 22.0 53.6 14.6 59.4 12.4 C63.4 11.2 68.6 12.6 71.4 16.4 C74.6 20.8 75.4 27.6 73.4 31.6 C72.0 34.4 69.0 36.0 66.0 35.2 L64.0 32.0 L62.6 35.6 C60.6 37.0 57.6 37.2 56.4 36.0 L55.4 32.4 L54.0 35.6 C51.6 35.4 50.2 33.4 50.4 31.4 Z" fill="#dd9a3e"/><path d="M58.6 22.4 C58.2 17.6 60.6 14.2 64.6 13.4 C67.8 13.2 70.2 15.2 70.8 18.0 C67.4 19.0 64.6 22.0 63.6 25.6 Z" fill="#7a4612"/><path d="M60.2 18.6 L69.6 15.6 M59.2 21.4 L70.4 17.6 M62.0 15.0 L64.6 24.0 M65.0 13.8 L67.4 21.6 M68.0 14.0 L69.6 19.2" stroke="#dd9a3e" stroke-width="0.8"/><path d="M66.0 35.2 C69.6 33.0 71.6 28.6 71.2 24.0 M55.4 32.4 C55.0 29.4 56.0 27.0 58.0 26.0 M64.0 32.0 C63.6 29.4 64.4 27.4 66.0 26.4" fill="none" stroke="#a86a1e" stroke-width="0.9"/></svg>
<svg class="a" style="left:351px;top:1051px;" width="18" height="18" viewBox="0 0 18 18"><rect x="0.9" y="5.2" width="11.2" height="7.6" fill="none" stroke="#fff" stroke-width="1.2"/><path d="M0.9 3.6 V1.6 H12.1 V3.6 M0.9 14.4 V16.4 H12.1 V14.4" fill="none" stroke="#fff" stroke-width="1.2"/><path d="M15.4 1.0 V4.0 M15.4 9.6 V16.9" stroke="#fff" stroke-width="1.3"/><rect x="14.3" y="5.0" width="2.3" height="3.2" fill="#fff"/></svg>
<svg class="a" style="left:399px;top:1048px;" width="24" height="24" viewBox="0 0 24 24"><defs><linearGradient id="xg" x1="0" y1="0" x2="0" y2="1"><stop offset="0" stop-color="#f78b2d"/><stop offset="1" stop-color="#e96f17"/></linearGradient></defs><rect x="0.3" y="0" width="23.4" height="23.4" rx="3" fill="url(#xg)"/><g fill="#fff"><circle cx="7.2" cy="7.4" r="4.3"/><circle cx="16.8" cy="7.4" r="4.3"/><circle cx="7.2" cy="16.2" r="4.3"/><circle cx="16.8" cy="16.2" r="4.3"/><rect x="6.4" y="7.4" width="11.2" height="8.8"/><rect x="7.2" y="4.6" width="9.6" height="14.4"/></g><g fill="#f07d22"><circle cx="7.4" cy="7.6" r="1.9"/><circle cx="16.6" cy="7.6" r="1.9"/><circle cx="7.4" cy="16.0" r="1.9"/><circle cx="16.6" cy="16.0" r="1.9"/><path d="M8.6 6.6 L12 8.6 L15.4 6.6 L17.0 9.0 L14.2 11.8 L17.0 14.6 L15.4 17.0 L12 15.0 L8.6 17.0 L7.0 14.6 L9.8 11.8 L7.0 9.0 Z"/><path d="M0.3 11.8 L4.4 9.6 L5.8 11.8 L4.4 14.0 Z M23.7 11.8 L19.6 9.6 L18.2 11.8 L19.6 14.0 Z" fill="#f07d22"/><path d="M12 3.0 L10.4 4.9 L12 6.0 L13.6 4.9 Z M12 20.6 L10.4 18.7 L12 17.6 L13.6 18.7 Z"/></g></svg>
<svg class="a" style="left:448px;top:1050px;" width="24" height="20" viewBox="0 0 24 20"><path d="M1.0 2.4 Q1.0 0.8 2.6 0.8 H8.4 L10.6 3.0 H21.2 Q22.6 3.0 22.6 4.4 V6 H1.0 Z" fill="#e8a91c"/><rect x="1.0" y="3.8" width="21.6" height="14.8" rx="1" fill="#fcd668"/><path d="M5.6 18.6 V12.2 Q5.6 11.2 6.6 11.2 H17.0 Q18.0 11.2 18.0 12.2 V18.6 H15.0 V14.4 H8.6 V18.6 Z" fill="#3b96e6"/></svg>
<svg class="a" style="left:496px;top:1047px;" width="26" height="26" viewBox="0 0 26 26"><path d="M18.2 3.6 L2.4 17.4 L0.9 16.2 Q0.5 15.6 1.0 15.0 L18.2 21.8 Z" fill="none"/><path d="M18.4 7.6 L4.6 19.4 Q3.8 20.0 3.0 19.4 L1.4 18.0 Q0.8 17.2 1.5 16.5 L18.0 1.4 Z" fill="#0a7ccb"/><path d="M18.4 18.4 L4.6 6.6 Q3.8 6.0 3.0 6.6 L1.4 8.0 Q0.8 8.8 1.5 9.5 L18.0 24.6 Z" fill="#1b93e3"/><path d="M18.0 0.9 Q18.8 0.6 19.6 1.0 L24.2 3.2 Q25.2 3.8 25.2 4.9 V21.1 Q25.2 22.2 24.2 22.8 L19.6 25.0 Q18.8 25.4 18.0 25.1 Z" fill="#2aa9f3"/></svg>
<div class="a" style="left:534px;top:1040px;width:48px;height:40px;background:#555555;"></div>
<svg class="a" style="left:546px;top:1048px;" width="24" height="24" viewBox="0 0 24 24"><circle cx="12" cy="12" r="11.6" fill="#34a853"/><path d="M12 12 L1.95 6.2 A11.6 11.6 0 0 1 22.05 6.2 Z" fill="#ea4335"/><path d="M1.95 6.2 A11.6 11.6 0 0 1 22.05 6.2 L12 6.2 Z" fill="#ea4335"/><path d="M22.05 6.2 A11.6 11.6 0 0 1 12 23.6 L17.0 14.9 L12 6.2 Z" fill="#fbbc05"/><path d="M12 6.2 H22.05 A11.6 11.6 0 0 1 12 23.6 L16.6 15.0 Z" fill="#fbbc05"/><path d="M1.95 6.2 L7.2 15.0 L12 23.6 A11.6 11.6 0 0 1 1.95 6.2 Z" fill="#34a853"/><circle cx="12" cy="12" r="5.6" fill="#fff"/><circle cx="12" cy="12" r="4.4" fill="#4285f4"/></svg>
<div class="a" style="left:556.25px;top:1058.5px;width:15.5px;height:15.5px;border-radius:50%;background:#f6f7f8;overflow:hidden;"><div class="a" style="left:5.3px;top:3.0px;width:5px;height:6px;border-radius:45%;background:#8a5a43;"></div><div class="a" style="left:4.8px;top:1.8px;width:6px;height:3.2px;border-radius:3px 3px 1px 1px;background:#17171c;"></div><div class="a" style="left:5.3px;top:6.6px;width:5px;height:2.6px;border-radius:0 0 3px 3px;background:#2a1d1a;"></div><div class="a" style="left:2.6px;top:9.6px;width:10.4px;height:7px;border-radius:4px 4px 0 0;background:#6f9fe0;"></div><div class="a" style="left:7.2px;top:10.2px;width:1.2px;height:5.4px;background:#1d2a55;"></div></div>
<svg class="a" style="left:596px;top:1047px;" width="22" height="26" viewBox="0 0 22 26"><defs><linearGradient id="bv" x1="0" y1="0" x2="1" y2="0"><stop offset="0" stop-color="#ff5a26"/><stop offset="1" stop-color="#ff2a00"/></linearGradient></defs><path d="M11 0.7 L14.8 0.7 L16.8 2.9 L18.6 2.5 L20.8 5.2 L20.0 7.2 L20.8 9.6 C19.6 15.0 17.6 19.6 14.0 22.6 L11 24.9 L8.0 22.6 C4.4 19.6 2.4 15.0 1.2 9.6 L2.0 7.2 L1.2 5.2 L3.4 2.5 L5.2 2.9 L7.2 0.7 Z" fill="url(#bv)"/><path d="M11 4.4 L14.4 3.9 L16.6 5.4 L18.2 8.6 L16.0 12.6 L13.4 14.4 L14.4 16.6 L11 19.4 L7.6 16.6 L8.6 14.4 L6.0 12.6 L3.8 8.6 L5.4 5.4 L7.6 3.9 Z" fill="#fff"/><path d="M11 6.4 L12.4 7.0 L11.6 11.6 L13.8 9.4 L15.6 9.0 L14.2 11.4 L11.8 13.0 L11 14.6 L10.2 13.0 L7.8 11.4 L6.4 9.0 L8.2 9.4 L10.4 11.6 L9.6 7.0 Z" fill="#fb4a1f"/><path d="M9.2 16.6 L11 15.6 L12.8 16.6 L11 17.8 Z" fill="#fb4a1f"/></svg>
<svg class="a" style="left:644px;top:1048px;" width="24" height="24" viewBox="0 0 24 24"><defs><linearGradient id="gg" x1="0" y1="0" x2="0" y2="1"><stop offset="0" stop-color="#21c083"/><stop offset="1" stop-color="#17b273"/></linearGradient></defs><rect x="0" y="0" width="24" height="23.4" rx="5" fill="url(#gg)"/><circle cx="9.0" cy="13.6" r="3.7" fill="none" stroke="#fff" stroke-width="1.7"/><path d="M12.8 6.0 V17.4" stroke="#fff" stroke-width="1.7"/><path d="M12.8 12.6 H16.4" stroke="#fff" stroke-width="1.6"/></svg>
<div class="a" style="left:654.25px;top:1058.5px;width:15.5px;height:15.5px;border-radius:50%;background:#f6f7f8;overflow:hidden;"><div class="a" style="left:5.3px;top:3.0px;width:5px;height:6px;border-radius:45%;background:#8a5a43;"></div><div class="a" style="left:4.8px;top:1.8px;width:6px;height:3.2px;border-radius:3px 3px 1px 1px;background:#17171c;"></div><div class="a" style="left:5.3px;top:6.6px;width:5px;height:2.6px;border-radius:0 0 3px 3px;background:#2a1d1a;"></div><div class="a" style="left:2.6px;top:9.6px;width:10.4px;height:7px;border-radius:4px 4px 0 0;background:#6f9fe0;"></div><div class="a" style="left:7.2px;top:10.2px;width:1.2px;height:5.4px;background:#1d2a55;"></div></div>
<div class="a" style="left:391px;top:1078px;width:40px;height:2px;background:#76b9ed;"></div>
<div class="a" style="left:489px;top:1078px;width:32px;height:2px;background:#76b9ed;"></div>
<div class="a" style="left:534px;top:1078px;width:48px;height:2px;background:#76b9ed;"></div>
<div class="a" style="left:587px;top:1078px;width:40px;height:2px;background:#76b9ed;"></div>
<div class="a" style="left:636px;top:1078px;width:40px;height:2px;background:#76b9ed;"></div>
<div class="a" style="left:522px;top:1078px;width:7px;height:2px;background:#5c94c0;"></div>
<svg class="a" style="left:1505px;top:1052px;" width="23" height="15" viewBox="0 0 23 15"><path d="M0.6 9.6 L6.0 4.2 L9.6 7.8 L15.2 2.2 L12.6 0.6 H21.6 V9.6 L19.2 6.6 L9.6 14.2 L6.0 10.6 L3.0 13.6 Z" fill="#27b32b"/><path d="M0.6 9.6 L6.0 4.2 L9.6 7.8 L6.0 10.6 L3.0 13.6 Z" fill="#1e8c23"/></svg>
<span class="a t" style="left:1536.3px;top:1049.6px;font:400 14px/20px 'Liberation Sans',sans-serif;color:#fff;letter-spacing:-0.771px;">SUNPHARMA</span>
<span class="a t" style="left:1630px;top:1049.6px;font:400 14px/20px 'Liberation Sans',sans-serif;color:#2bc43a;letter-spacing:-0.575px;">+2.73%</span>
<svg class="a" style="left:1700px;top:1055px;" width="14" height="10" viewBox="0 0 14 10"><path d="M1.4 8.2 L7 2.4 L12.6 8.2" fill="none" stroke="#fff" stroke-width="1.3"/></svg>
<svg class="a" style="left:1722px;top:1051px;" width="18" height="18" viewBox="0 0 18 18"><path d="M1.2 6.6 H3.8 L7.6 3.0 V15.0 L3.8 11.4 H1.2 Z" fill="none" stroke="#fff" stroke-width="1.1" stroke-linejoin="round"/><path d="M9.8 6.6 Q11.2 9 9.8 11.4 M11.8 4.8 Q14.2 9 11.8 13.2" fill="none" stroke="#fff" stroke-width="1.1"/><path d="M13.9 3.0 Q17.0 9 13.9 15.0" fill="none" stroke="#8a8a8a" stroke-width="1.1"/></svg>
<svg class="a" style="left:1746px;top:1052px;" width="18" height="16" viewBox="0 0 18 16"><rect x="4.6" y="2.0" width="12.2" height="8.6" fill="none" stroke="#fff" stroke-width="1.1"/><path d="M10.6 10.8 V14.0 M6.6 14.2 H14.6" stroke="#fff" stroke-width="1.1"/><rect x="0.8" y="0.8" width="4.2" height="3.6" fill="#1c1c1c" stroke="#fff" stroke-width="1"/><path d="M2.9 4.4 V14.2 H6.6" fill="none" stroke="#fff" stroke-width="1"/></svg>
<span class="a t" style="left:1773.3px;top:1052.7px;font:400 11px/15px 'Liberation Sans',sans-serif;color:#fff;letter-spacing:-0.772px;">ENG</span>
<span class="a t" style="left:1814.3px;top:1042.8px;font:400 11.5px/16px 'Liberation Sans',sans-serif;color:#fff;letter-spacing:-0.255px;">3:03 PM</span>
<span class="a t" style="left:1809.5px;top:1060.8px;font:400 11.5px/16px 'Liberation Sans',sans-serif;color:#fff;letter-spacing:0.016px;">7/15/2025</span>
<svg class="a" style="left:1879px;top:1052px;" width="17" height="14" viewBox="0 0 17 14"><path d="M0.4 0.4 H16.4 V11.0 H4.6 L0.4 13.6 Z" fill="#fff"/><path d="M3.2 3.4 H13.6 M3.2 5.9 H13.6 M3.2 8.4 H10" stroke="#1c1c1c" stroke-width="1"/></svg>
<div class="a" style="left:1886.5px;top:1059.5px;width:16px;height:16px;border-radius:50%;background:#2a2a2a;border:1.3px solid #9a9a9a;"></div>
<span class="a t" style="left:1892.4px;top:1060.1px;font:700 10.5px/15px 'Liberation Sans',sans-serif;color:#fff;">1</span>
<div class="a" style="left:1914.5px;top:1040px;width:1px;height:40px;background:#5c5c5c;"></div>
</body></html>
